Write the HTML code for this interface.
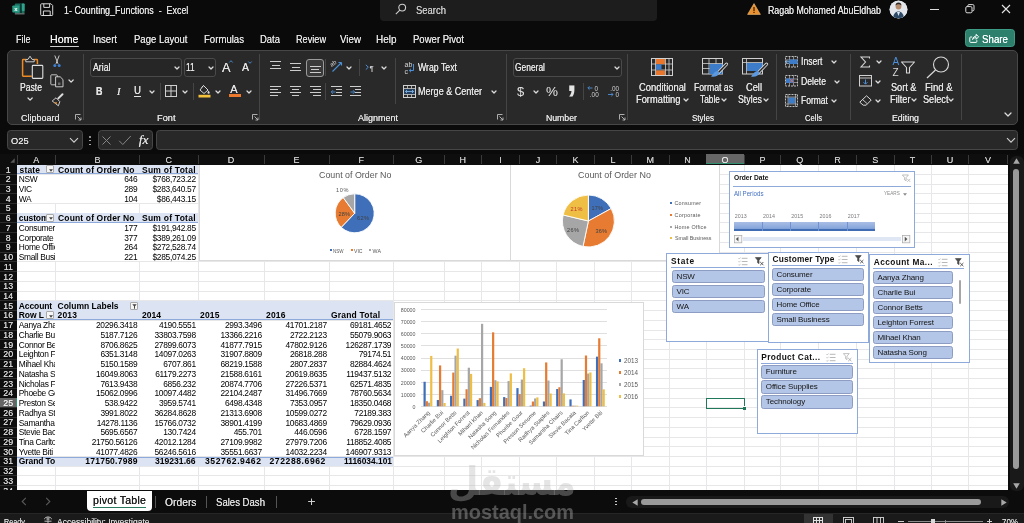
<!DOCTYPE html>
<html lang="en"><head><meta charset="utf-8"><title>1- Counting_Functions - Excel</title>
<style>
html,body{margin:0;padding:0;background:#0a0a0a;}
body{width:1024px;height:523px;overflow:hidden;position:relative;will-change:transform;font-family:"Liberation Sans",sans-serif;}
.t{position:absolute;white-space:pre;display:block;}
.ui .t{text-shadow:0 0 .45px currentColor;}
.r{position:absolute;display:block;}
svg{overflow:visible;}
</style></head>
<body>
<!-- gen_frame -->
<div class="ui">
<svg class="r" style="left:11.500px;top:2.800px" width="13" height="12" viewBox="0 0 13 12"><rect x="2.800" y="9.600" width="9.800" height="2" rx="0.600" fill="#5c6b68"/><rect x="2.800" y="0.400" width="9.800" height="9.600" rx="1" fill="#1b6f60"/><rect x="8" y="0.400" width="2" height="9.600" fill="#0d3b33"/><rect x="9.800" y="0.400" width="2.800" height="7.600" rx="0.800" fill="#2fa28c"/><rect x="0.300" y="2.400" width="7" height="7" rx="0.900" fill="#2a9b86"/><text x="3.800" y="8" font-size="6" font-weight="bold" fill="#fff" text-anchor="middle" font-family="Liberation Sans, sans-serif">x</text></svg>
<svg class="r" style="left:40px;top:3px" width="14" height="13" viewBox="0 0 14 13" fill="none" stroke="#d8d8d8" stroke-width="1"><path d="M1.5 0.8h9.5l1.7 1.7v9.2a.8.8 0 0 1-.8.8h-10.4a.8.8 0 0 1-.8-.8v-10.1a.8.8 0 0 1 .8-.8z"/><path d="M3.8 0.8v3.6h5.8v-3.6"/><path d="M3.4 12.4v-4.4h6.8v4.4"/></svg>
<span class="t" style="left:64.00px;top:4.79px;font-size:10.2px;line-height:12.24px;color:#e4e4e4;transform:scaleX(0.8749);transform-origin:0 50%;">1- Counting_Functions  -  Excel</span>
<div class="r" style="left:380.00px;top:0.00px;width:277.00px;height:21.00px;background:#1d1d1d;border-radius:0 0 4px 4px;"></div>
<svg class="r" style="left:395px;top:3px" width="12" height="12" viewBox="0 0 12 12" fill="none" stroke="#cfcfcf" stroke-width="1.1"><circle cx="7.2" cy="4.6" r="3.4"/><path d="M4.8 7.1L0.8 11.2"/></svg>
<span class="t" style="left:416.00px;top:4.59px;font-size:10.2px;line-height:12.24px;color:#c9c9c9;transform:scaleX(0.9283);transform-origin:0 50%;">Search</span>
<svg class="r" style="left:747px;top:3px" width="14" height="12" viewBox="0 0 14 12"><path d="M7 0.6L13.4 11.4H0.6z" fill="#e9902f" stroke="#f4c27a" stroke-width="0.6"/><rect x="6.4" y="4" width="1.2" height="4" fill="#3a1a00"/><rect x="6.4" y="8.8" width="1.2" height="1.2" fill="#3a1a00"/></svg>
<span class="t" style="left:768.00px;top:4.59px;font-size:10.2px;line-height:12.24px;color:#e4e4e4;transform:scaleX(0.8664);transform-origin:0 50%;">Ragab Mohamed AbuEldhab</span>
<svg class="r" style="left:889px;top:0px" width="19" height="19" viewBox="0 0 19 19"><defs><clipPath id="av"><circle cx="9.5" cy="9.5" r="8.8"/></clipPath></defs><circle cx="9.5" cy="9.5" r="9" fill="#e9ecef"/><g clip-path="url(#av)"><rect x="0" y="0" width="19" height="19" fill="#e3e6ea"/><path d="M4 19c0-5 2.5-7.5 5.5-7.5s5.500 2.5 5.500 7.500z" fill="#2d4a66"/><circle cx="9.5" cy="6.500" r="2.900" fill="#b58b6e"/><path d="M6.5 5.600c0-2.200 1.300-3.200 3-3.200s3 1 3 3.200c-1-1-2-1.300-3-1.300s-2 .3-3 1.300z" fill="#2a2422"/><path d="M8 12l1.500 4 1.500-4z" fill="#dfe6ee"/></g></svg>
<div class="r" style="left:930.00px;top:8.60px;width:8.50px;height:1.10px;background:#dcdcdc;"></div>
<svg class="r" style="left:965px;top:4px" width="10" height="10" viewBox="0 0 10 10" fill="none" stroke="#dcdcdc" stroke-width="1"><rect x="0.8" y="2.600" width="6.200" height="6.200" rx="1.200"/><path d="M2.800 2.400v-.6a1.200 1.200 0 0 1 1.200-1.200h3.800a1.200 1.200 0 0 1 1.200 1.200v3.800a1.200 1.200 0 0 1-1.200 1.200h-.6"/></svg>
<svg class="r" style="left:1001px;top:4px" width="10" height="10" viewBox="0 0 10 10" fill="none" stroke="#e4e4e4" stroke-width="1.100"><path d="M1 1l8 8M9 1l-8 8"/></svg>
<span class="t" style="left:16.00px;top:32.88px;font-size:10.6px;line-height:12.72px;color:#e2e2e2;transform:scaleX(0.8489);transform-origin:0 50%;">File</span>
<span class="t" style="left:50.00px;top:32.88px;font-size:10.6px;line-height:12.72px;color:#f4f4f4;letter-spacing:0.075px;text-shadow:0 0 .4px #fff;">Home</span>
<span class="t" style="left:93.00px;top:32.88px;font-size:10.6px;line-height:12.72px;color:#e2e2e2;transform:scaleX(0.9053);transform-origin:0 50%;">Insert</span>
<span class="t" style="left:134.00px;top:32.88px;font-size:10.6px;line-height:12.72px;color:#e2e2e2;transform:scaleX(0.8988);transform-origin:0 50%;">Page Layout</span>
<span class="t" style="left:203.50px;top:32.88px;font-size:10.6px;line-height:12.72px;color:#e2e2e2;transform:scaleX(0.9055);transform-origin:0 50%;">Formulas</span>
<span class="t" style="left:259.50px;top:32.88px;font-size:10.6px;line-height:12.72px;color:#e2e2e2;transform:scaleX(0.8932);transform-origin:0 50%;">Data</span>
<span class="t" style="left:295.50px;top:32.88px;font-size:10.6px;line-height:12.72px;color:#e2e2e2;transform:scaleX(0.8632);transform-origin:0 50%;">Review</span>
<span class="t" style="left:340.00px;top:32.88px;font-size:10.6px;line-height:12.72px;color:#e2e2e2;transform:scaleX(0.9217);transform-origin:0 50%;">View</span>
<span class="t" style="left:375.50px;top:32.88px;font-size:10.6px;line-height:12.72px;color:#e2e2e2;transform:scaleX(0.9403);transform-origin:0 50%;">Help</span>
<span class="t" style="left:412.50px;top:32.88px;font-size:10.6px;line-height:12.72px;color:#e2e2e2;transform:scaleX(0.9018);transform-origin:0 50%;">Power Pivot</span>
<div class="r" style="left:50.00px;top:45.50px;width:28.50px;height:1.50px;background:#d0d0d0;border-radius:1px;"></div>
<div class="r" style="left:964.50px;top:29.30px;width:50.30px;height:17.70px;background:#2c806c;border-radius:3.5px;border:1px solid #3c9c85;box-sizing:border-box;"></div>
<svg class="r" style="left:969px;top:33px" width="10" height="10" viewBox="0 0 10 10" fill="none" stroke="#fff" stroke-width="1"><path d="M3.200 4h-1.700a.7.7 0 0 0-.7.7v4a.7.7 0 0 0 .7.7h5.600a.7.7 0 0 0 .7-.7v-1.500"/><path d="M3.600 6.600c.3-2.300 1.700-3.400 3.600-3.500v-1.800l2.400 2.500-2.400 2.500v-1.700c-1.500 0-2.700.5-3.600 2z"/></svg>
<span class="t" style="left:981.50px;top:32.58px;font-size:10.8px;line-height:12.96px;color:#ffffff;transform:scaleX(0.9022);transform-origin:0 50%;text-shadow:0 0 .5px #fff;">Share</span>
<div class="r" style="left:6.50px;top:50.00px;width:1011.50px;height:74.50px;background:#292929;border-radius:5px;border:1px solid #474747;box-sizing:border-box;"></div>
<div class="r" style="left:83.00px;top:54.00px;width:1.00px;height:66.00px;background:#454545;"></div>
<div class="r" style="left:259.00px;top:54.00px;width:1.00px;height:66.00px;background:#454545;"></div>
<div class="r" style="left:506.00px;top:54.00px;width:1.00px;height:66.00px;background:#454545;"></div>
<div class="r" style="left:627.00px;top:54.00px;width:1.00px;height:66.00px;background:#454545;"></div>
<div class="r" style="left:776.00px;top:54.00px;width:1.00px;height:66.00px;background:#454545;"></div>
<div class="r" style="left:849.50px;top:54.00px;width:1.00px;height:66.00px;background:#454545;"></div>
<div class="r" style="left:960.50px;top:54.00px;width:1.00px;height:66.00px;background:#454545;"></div>
<div class="r" style="left:6.50px;top:130.00px;width:76.00px;height:19.50px;background:#282828;border-radius:3.500px;border:1px solid #464646;box-sizing:border-box;"></div>
<span class="t" style="left:11.20px;top:135.32px;font-size:9.4px;line-height:11.28px;color:#e4e4e4;transform:scaleX(0.9906);transform-origin:0 50%;">O25</span>
<svg class="r" style="left:69px;top:137px" width="10" height="7" viewBox="0 0 10 7" fill="none" stroke="#d0d0d0" stroke-width="1.100"><path d="M1 1.200l4 4 4-4"/></svg>
<div class="r" style="left:89.30px;top:136.30px;width:1.40px;height:1.40px;background:#bdbdbd;border-radius:1px;"></div>
<div class="r" style="left:89.30px;top:140.00px;width:1.40px;height:1.40px;background:#bdbdbd;border-radius:1px;"></div>
<div class="r" style="left:89.30px;top:143.70px;width:1.40px;height:1.40px;background:#bdbdbd;border-radius:1px;"></div>
<div class="r" style="left:97.50px;top:130.00px;width:55.50px;height:19.50px;background:#282828;border-radius:3.500px;border:1px solid #464646;box-sizing:border-box;"></div>
<svg class="r" style="left:101px;top:135px" width="11" height="11" viewBox="0 0 11 11" fill="none" stroke="#858585" stroke-width="1"><path d="M1.500 1.500l8 8M9.500 1.500l-8 8"/></svg>
<svg class="r" style="left:118px;top:135px" width="14" height="11" viewBox="0 0 14 11" fill="none" stroke="#858585" stroke-width="1"><path d="M1.200 5.800l3.600 3.700 8-8.500"/></svg>
<span class="t" style="left:138.63px;top:132.15px;font-size:13.5px;line-height:16.20px;color:#e0e0e0;font-style:italic;font-family:'Liberation Serif',serif;">fx</span>
<div class="r" style="left:156.00px;top:130.00px;width:862.00px;height:19.50px;background:#282828;border-radius:3.500px;border:1px solid #464646;box-sizing:border-box;"></div>
<svg class="r" style="left:1006px;top:136.500px" width="10" height="7" viewBox="0 0 10 7" fill="none" stroke="#d0d0d0" stroke-width="1.100"><path d="M1 1.200l4 4 4-4"/></svg>
</div>
<!-- gen_grid -->
<div class="ui">
<div class="r" style="left:0.00px;top:153.50px;width:1024.00px;height:336.50px;background:#0e0e0e;"></div>
<div class="r" style="left:17.00px;top:164.60px;width:990.70px;height:325.40px;background:#ffffff;"></div>
<div class="r" style="left:55.00px;top:164.60px;width:1.00px;height:325.40px;background:#e7e7ea;"></div>
<div class="r" style="left:139.00px;top:164.60px;width:1.00px;height:325.40px;background:#e7e7ea;"></div>
<div class="r" style="left:197.50px;top:164.60px;width:1.00px;height:325.40px;background:#e7e7ea;"></div>
<div class="r" style="left:263.50px;top:164.60px;width:1.00px;height:325.40px;background:#e7e7ea;"></div>
<div class="r" style="left:328.50px;top:164.60px;width:1.00px;height:325.40px;background:#e7e7ea;"></div>
<div class="r" style="left:392.90px;top:164.60px;width:1.00px;height:325.40px;background:#e7e7ea;"></div>
<div class="r" style="left:443.50px;top:164.60px;width:1.00px;height:325.40px;background:#e7e7ea;"></div>
<div class="r" style="left:481.00px;top:164.60px;width:1.00px;height:325.40px;background:#e7e7ea;"></div>
<div class="r" style="left:519.20px;top:164.60px;width:1.00px;height:325.40px;background:#e7e7ea;"></div>
<div class="r" style="left:556.00px;top:164.60px;width:1.00px;height:325.40px;background:#e7e7ea;"></div>
<div class="r" style="left:594.20px;top:164.60px;width:1.00px;height:325.40px;background:#e7e7ea;"></div>
<div class="r" style="left:631.00px;top:164.60px;width:1.00px;height:325.40px;background:#e7e7ea;"></div>
<div class="r" style="left:668.50px;top:164.60px;width:1.00px;height:325.40px;background:#e7e7ea;"></div>
<div class="r" style="left:705.50px;top:164.60px;width:1.00px;height:325.40px;background:#e7e7ea;"></div>
<div class="r" style="left:743.70px;top:164.60px;width:1.00px;height:325.40px;background:#e7e7ea;"></div>
<div class="r" style="left:780.20px;top:164.60px;width:1.00px;height:325.40px;background:#e7e7ea;"></div>
<div class="r" style="left:818.20px;top:164.60px;width:1.00px;height:325.40px;background:#e7e7ea;"></div>
<div class="r" style="left:855.90px;top:164.60px;width:1.00px;height:325.40px;background:#e7e7ea;"></div>
<div class="r" style="left:893.50px;top:164.60px;width:1.00px;height:325.40px;background:#e7e7ea;"></div>
<div class="r" style="left:930.50px;top:164.60px;width:1.00px;height:325.40px;background:#e7e7ea;"></div>
<div class="r" style="left:968.30px;top:164.60px;width:1.00px;height:325.40px;background:#e7e7ea;"></div>
<div class="r" style="left:17.00px;top:173.83px;width:990.70px;height:1.00px;background:#e7e7ea;"></div>
<div class="r" style="left:17.00px;top:183.56px;width:990.70px;height:1.00px;background:#e7e7ea;"></div>
<div class="r" style="left:17.00px;top:193.29px;width:990.70px;height:1.00px;background:#e7e7ea;"></div>
<div class="r" style="left:17.00px;top:203.02px;width:990.70px;height:1.00px;background:#e7e7ea;"></div>
<div class="r" style="left:17.00px;top:212.75px;width:990.70px;height:1.00px;background:#e7e7ea;"></div>
<div class="r" style="left:17.00px;top:222.48px;width:990.70px;height:1.00px;background:#e7e7ea;"></div>
<div class="r" style="left:17.00px;top:232.21px;width:990.70px;height:1.00px;background:#e7e7ea;"></div>
<div class="r" style="left:17.00px;top:241.94px;width:990.70px;height:1.00px;background:#e7e7ea;"></div>
<div class="r" style="left:17.00px;top:251.67px;width:990.70px;height:1.00px;background:#e7e7ea;"></div>
<div class="r" style="left:17.00px;top:261.40px;width:990.70px;height:1.00px;background:#e7e7ea;"></div>
<div class="r" style="left:17.00px;top:271.13px;width:990.70px;height:1.00px;background:#e7e7ea;"></div>
<div class="r" style="left:17.00px;top:280.86px;width:990.70px;height:1.00px;background:#e7e7ea;"></div>
<div class="r" style="left:17.00px;top:290.59px;width:990.70px;height:1.00px;background:#e7e7ea;"></div>
<div class="r" style="left:17.00px;top:300.32px;width:990.70px;height:1.00px;background:#e7e7ea;"></div>
<div class="r" style="left:17.00px;top:310.05px;width:990.70px;height:1.00px;background:#e7e7ea;"></div>
<div class="r" style="left:17.00px;top:319.78px;width:990.70px;height:1.00px;background:#e7e7ea;"></div>
<div class="r" style="left:17.00px;top:329.51px;width:990.70px;height:1.00px;background:#e7e7ea;"></div>
<div class="r" style="left:17.00px;top:339.24px;width:990.70px;height:1.00px;background:#e7e7ea;"></div>
<div class="r" style="left:17.00px;top:348.97px;width:990.70px;height:1.00px;background:#e7e7ea;"></div>
<div class="r" style="left:17.00px;top:358.70px;width:990.70px;height:1.00px;background:#e7e7ea;"></div>
<div class="r" style="left:17.00px;top:368.43px;width:990.70px;height:1.00px;background:#e7e7ea;"></div>
<div class="r" style="left:17.00px;top:378.16px;width:990.70px;height:1.00px;background:#e7e7ea;"></div>
<div class="r" style="left:17.00px;top:387.89px;width:990.70px;height:1.00px;background:#e7e7ea;"></div>
<div class="r" style="left:17.00px;top:397.62px;width:990.70px;height:1.00px;background:#e7e7ea;"></div>
<div class="r" style="left:17.00px;top:407.35px;width:990.70px;height:1.00px;background:#e7e7ea;"></div>
<div class="r" style="left:17.00px;top:417.08px;width:990.70px;height:1.00px;background:#e7e7ea;"></div>
<div class="r" style="left:17.00px;top:426.81px;width:990.70px;height:1.00px;background:#e7e7ea;"></div>
<div class="r" style="left:17.00px;top:436.54px;width:990.70px;height:1.00px;background:#e7e7ea;"></div>
<div class="r" style="left:17.00px;top:446.27px;width:990.70px;height:1.00px;background:#e7e7ea;"></div>
<div class="r" style="left:17.00px;top:456.00px;width:990.70px;height:1.00px;background:#e7e7ea;"></div>
<div class="r" style="left:17.00px;top:465.73px;width:990.70px;height:1.00px;background:#e7e7ea;"></div>
<div class="r" style="left:17.00px;top:475.46px;width:990.70px;height:1.00px;background:#e7e7ea;"></div>
<div class="r" style="left:17.00px;top:485.19px;width:990.70px;height:1.00px;background:#e7e7ea;"></div>
<span class="t" style="left:33.25px;top:154.53px;font-size:9px;line-height:10.80px;color:#c8c8c8;">A</span>
<div class="r" style="left:55.00px;top:155.00px;width:1.00px;height:9.00px;background:#3a3a3a;"></div>
<span class="t" style="left:94.50px;top:154.53px;font-size:9px;line-height:10.80px;color:#c8c8c8;">B</span>
<div class="r" style="left:139.00px;top:155.00px;width:1.00px;height:9.00px;background:#3a3a3a;"></div>
<span class="t" style="left:165.50px;top:154.53px;font-size:9px;line-height:10.80px;color:#c8c8c8;">C</span>
<div class="r" style="left:197.50px;top:155.00px;width:1.00px;height:9.00px;background:#3a3a3a;"></div>
<span class="t" style="left:227.75px;top:154.53px;font-size:9px;line-height:10.80px;color:#c8c8c8;">D</span>
<div class="r" style="left:263.50px;top:155.00px;width:1.00px;height:9.00px;background:#3a3a3a;"></div>
<span class="t" style="left:293.50px;top:154.53px;font-size:9px;line-height:10.80px;color:#c8c8c8;">E</span>
<div class="r" style="left:328.50px;top:155.00px;width:1.00px;height:9.00px;background:#3a3a3a;"></div>
<span class="t" style="left:358.45px;top:154.53px;font-size:9px;line-height:10.80px;color:#c8c8c8;">F</span>
<div class="r" style="left:392.90px;top:155.00px;width:1.00px;height:9.00px;background:#3a3a3a;"></div>
<span class="t" style="left:415.20px;top:154.53px;font-size:9px;line-height:10.80px;color:#c8c8c8;">G</span>
<div class="r" style="left:443.50px;top:155.00px;width:1.00px;height:9.00px;background:#3a3a3a;"></div>
<span class="t" style="left:459.50px;top:154.53px;font-size:9px;line-height:10.80px;color:#c8c8c8;">H</span>
<div class="r" style="left:481.00px;top:155.00px;width:1.00px;height:9.00px;background:#3a3a3a;"></div>
<span class="t" style="left:499.35px;top:154.53px;font-size:9px;line-height:10.80px;color:#c8c8c8;">I</span>
<div class="r" style="left:519.20px;top:155.00px;width:1.00px;height:9.00px;background:#3a3a3a;"></div>
<span class="t" style="left:535.85px;top:154.53px;font-size:9px;line-height:10.80px;color:#c8c8c8;">J</span>
<div class="r" style="left:556.00px;top:155.00px;width:1.00px;height:9.00px;background:#3a3a3a;"></div>
<span class="t" style="left:572.60px;top:154.53px;font-size:9px;line-height:10.80px;color:#c8c8c8;">K</span>
<div class="r" style="left:594.20px;top:155.00px;width:1.00px;height:9.00px;background:#3a3a3a;"></div>
<span class="t" style="left:610.60px;top:154.53px;font-size:9px;line-height:10.80px;color:#c8c8c8;">L</span>
<div class="r" style="left:631.00px;top:155.00px;width:1.00px;height:9.00px;background:#3a3a3a;"></div>
<span class="t" style="left:646.50px;top:154.53px;font-size:9px;line-height:10.80px;color:#c8c8c8;">M</span>
<div class="r" style="left:668.50px;top:155.00px;width:1.00px;height:9.00px;background:#3a3a3a;"></div>
<span class="t" style="left:684.25px;top:154.53px;font-size:9px;line-height:10.80px;color:#c8c8c8;">N</span>
<div class="r" style="left:705.50px;top:155.00px;width:1.00px;height:9.00px;background:#3a3a3a;"></div>
<div class="r" style="left:706.00px;top:154.00px;width:38.20px;height:10.00px;background:#666666;border-bottom:1px solid #2f8f6f;box-sizing:border-box;"></div>
<span class="t" style="left:721.60px;top:154.53px;font-size:9px;line-height:10.80px;color:#e6e6e6;">O</span>
<div class="r" style="left:743.70px;top:155.00px;width:1.00px;height:9.00px;background:#3a3a3a;"></div>
<span class="t" style="left:759.45px;top:154.53px;font-size:9px;line-height:10.80px;color:#c8c8c8;">P</span>
<div class="r" style="left:780.20px;top:155.00px;width:1.00px;height:9.00px;background:#3a3a3a;"></div>
<span class="t" style="left:796.20px;top:154.53px;font-size:9px;line-height:10.80px;color:#c8c8c8;">Q</span>
<div class="r" style="left:818.20px;top:155.00px;width:1.00px;height:9.00px;background:#3a3a3a;"></div>
<span class="t" style="left:834.30px;top:154.53px;font-size:9px;line-height:10.80px;color:#c8c8c8;">R</span>
<div class="r" style="left:855.90px;top:155.00px;width:1.00px;height:9.00px;background:#3a3a3a;"></div>
<span class="t" style="left:872.20px;top:154.53px;font-size:9px;line-height:10.80px;color:#c8c8c8;">S</span>
<div class="r" style="left:893.50px;top:155.00px;width:1.00px;height:9.00px;background:#3a3a3a;"></div>
<span class="t" style="left:909.75px;top:154.53px;font-size:9px;line-height:10.80px;color:#c8c8c8;">T</span>
<div class="r" style="left:930.50px;top:155.00px;width:1.00px;height:9.00px;background:#3a3a3a;"></div>
<span class="t" style="left:946.65px;top:154.53px;font-size:9px;line-height:10.80px;color:#c8c8c8;">U</span>
<div class="r" style="left:968.30px;top:155.00px;width:1.00px;height:9.00px;background:#3a3a3a;"></div>
<span class="t" style="left:984.90px;top:154.53px;font-size:9px;line-height:10.80px;color:#c8c8c8;">V</span>
<div class="r" style="left:1006.50px;top:155.00px;width:1.00px;height:9.00px;background:#3a3a3a;"></div>
<div class="r" style="left:16.50px;top:155.00px;width:1.00px;height:9.00px;background:#3a3a3a;"></div>
<svg class="r" style="left:10px;top:158px" width="5" height="5" viewBox="0 0 5 5"><path d="M4.700 0.300v4.400h-4.400z" fill="#5a5a5a"/></svg>
<span class="t" style="left:5.80px;top:164.50px;font-size:8.8px;line-height:10.56px;color:#d4d4d4;">1</span>
<div class="r" style="left:0.00px;top:173.83px;width:17.00px;height:1.00px;background:#2c2c2c;"></div>
<span class="t" style="left:5.80px;top:174.23px;font-size:8.8px;line-height:10.56px;color:#d4d4d4;">2</span>
<div class="r" style="left:0.00px;top:183.56px;width:17.00px;height:1.00px;background:#2c2c2c;"></div>
<span class="t" style="left:5.80px;top:183.96px;font-size:8.8px;line-height:10.56px;color:#d4d4d4;">3</span>
<div class="r" style="left:0.00px;top:193.29px;width:17.00px;height:1.00px;background:#2c2c2c;"></div>
<span class="t" style="left:5.80px;top:193.69px;font-size:8.8px;line-height:10.56px;color:#d4d4d4;">4</span>
<div class="r" style="left:0.00px;top:203.02px;width:17.00px;height:1.00px;background:#2c2c2c;"></div>
<span class="t" style="left:5.80px;top:203.42px;font-size:8.8px;line-height:10.56px;color:#d4d4d4;">5</span>
<div class="r" style="left:0.00px;top:212.75px;width:17.00px;height:1.00px;background:#2c2c2c;"></div>
<span class="t" style="left:5.80px;top:213.15px;font-size:8.8px;line-height:10.56px;color:#d4d4d4;">6</span>
<div class="r" style="left:0.00px;top:222.48px;width:17.00px;height:1.00px;background:#2c2c2c;"></div>
<span class="t" style="left:5.80px;top:222.88px;font-size:8.8px;line-height:10.56px;color:#d4d4d4;">7</span>
<div class="r" style="left:0.00px;top:232.21px;width:17.00px;height:1.00px;background:#2c2c2c;"></div>
<span class="t" style="left:5.80px;top:232.61px;font-size:8.8px;line-height:10.56px;color:#d4d4d4;">8</span>
<div class="r" style="left:0.00px;top:241.94px;width:17.00px;height:1.00px;background:#2c2c2c;"></div>
<span class="t" style="left:5.80px;top:242.34px;font-size:8.8px;line-height:10.56px;color:#d4d4d4;">9</span>
<div class="r" style="left:0.00px;top:251.67px;width:17.00px;height:1.00px;background:#2c2c2c;"></div>
<span class="t" style="left:3.36px;top:252.07px;font-size:8.8px;line-height:10.56px;color:#d4d4d4;">10</span>
<div class="r" style="left:0.00px;top:261.40px;width:17.00px;height:1.00px;background:#2c2c2c;"></div>
<span class="t" style="left:3.68px;top:261.80px;font-size:8.8px;line-height:10.56px;color:#d4d4d4;">11</span>
<div class="r" style="left:0.00px;top:271.13px;width:17.00px;height:1.00px;background:#2c2c2c;"></div>
<span class="t" style="left:3.36px;top:271.53px;font-size:8.8px;line-height:10.56px;color:#d4d4d4;">12</span>
<div class="r" style="left:0.00px;top:280.86px;width:17.00px;height:1.00px;background:#2c2c2c;"></div>
<span class="t" style="left:3.36px;top:281.26px;font-size:8.8px;line-height:10.56px;color:#d4d4d4;">13</span>
<div class="r" style="left:0.00px;top:290.59px;width:17.00px;height:1.00px;background:#2c2c2c;"></div>
<span class="t" style="left:3.36px;top:290.99px;font-size:8.8px;line-height:10.56px;color:#d4d4d4;">14</span>
<div class="r" style="left:0.00px;top:300.32px;width:17.00px;height:1.00px;background:#2c2c2c;"></div>
<span class="t" style="left:3.36px;top:300.72px;font-size:8.8px;line-height:10.56px;color:#d4d4d4;">15</span>
<div class="r" style="left:0.00px;top:310.05px;width:17.00px;height:1.00px;background:#2c2c2c;"></div>
<span class="t" style="left:3.36px;top:310.45px;font-size:8.8px;line-height:10.56px;color:#d4d4d4;">16</span>
<div class="r" style="left:0.00px;top:319.78px;width:17.00px;height:1.00px;background:#2c2c2c;"></div>
<span class="t" style="left:3.36px;top:320.18px;font-size:8.8px;line-height:10.56px;color:#d4d4d4;">17</span>
<div class="r" style="left:0.00px;top:329.51px;width:17.00px;height:1.00px;background:#2c2c2c;"></div>
<span class="t" style="left:3.36px;top:329.91px;font-size:8.8px;line-height:10.56px;color:#d4d4d4;">18</span>
<div class="r" style="left:0.00px;top:339.24px;width:17.00px;height:1.00px;background:#2c2c2c;"></div>
<span class="t" style="left:3.36px;top:339.64px;font-size:8.8px;line-height:10.56px;color:#d4d4d4;">19</span>
<div class="r" style="left:0.00px;top:348.97px;width:17.00px;height:1.00px;background:#2c2c2c;"></div>
<span class="t" style="left:3.36px;top:349.37px;font-size:8.8px;line-height:10.56px;color:#d4d4d4;">20</span>
<div class="r" style="left:0.00px;top:358.70px;width:17.00px;height:1.00px;background:#2c2c2c;"></div>
<span class="t" style="left:3.36px;top:359.10px;font-size:8.8px;line-height:10.56px;color:#d4d4d4;">21</span>
<div class="r" style="left:0.00px;top:368.43px;width:17.00px;height:1.00px;background:#2c2c2c;"></div>
<span class="t" style="left:3.36px;top:368.83px;font-size:8.8px;line-height:10.56px;color:#d4d4d4;">22</span>
<div class="r" style="left:0.00px;top:378.16px;width:17.00px;height:1.00px;background:#2c2c2c;"></div>
<span class="t" style="left:3.36px;top:378.56px;font-size:8.8px;line-height:10.56px;color:#d4d4d4;">23</span>
<div class="r" style="left:0.00px;top:387.89px;width:17.00px;height:1.00px;background:#2c2c2c;"></div>
<span class="t" style="left:3.36px;top:388.29px;font-size:8.8px;line-height:10.56px;color:#d4d4d4;">24</span>
<div class="r" style="left:0.00px;top:397.62px;width:17.00px;height:1.00px;background:#2c2c2c;"></div>
<div class="r" style="left:0.00px;top:398.12px;width:17.00px;height:9.73px;background:#666666;border-right:1px solid #2f8f6f;box-sizing:border-box;"></div>
<span class="t" style="left:3.36px;top:398.02px;font-size:8.8px;line-height:10.56px;color:#f0f0f0;">25</span>
<div class="r" style="left:0.00px;top:407.35px;width:17.00px;height:1.00px;background:#2c2c2c;"></div>
<span class="t" style="left:3.36px;top:407.75px;font-size:8.8px;line-height:10.56px;color:#d4d4d4;">26</span>
<div class="r" style="left:0.00px;top:417.08px;width:17.00px;height:1.00px;background:#2c2c2c;"></div>
<span class="t" style="left:3.36px;top:417.48px;font-size:8.8px;line-height:10.56px;color:#d4d4d4;">27</span>
<div class="r" style="left:0.00px;top:426.81px;width:17.00px;height:1.00px;background:#2c2c2c;"></div>
<span class="t" style="left:3.36px;top:427.21px;font-size:8.8px;line-height:10.56px;color:#d4d4d4;">28</span>
<div class="r" style="left:0.00px;top:436.54px;width:17.00px;height:1.00px;background:#2c2c2c;"></div>
<span class="t" style="left:3.36px;top:436.94px;font-size:8.8px;line-height:10.56px;color:#d4d4d4;">29</span>
<div class="r" style="left:0.00px;top:446.27px;width:17.00px;height:1.00px;background:#2c2c2c;"></div>
<span class="t" style="left:3.36px;top:446.67px;font-size:8.8px;line-height:10.56px;color:#d4d4d4;">30</span>
<div class="r" style="left:0.00px;top:456.00px;width:17.00px;height:1.00px;background:#2c2c2c;"></div>
<span class="t" style="left:3.36px;top:456.40px;font-size:8.8px;line-height:10.56px;color:#d4d4d4;">31</span>
<div class="r" style="left:0.00px;top:465.73px;width:17.00px;height:1.00px;background:#2c2c2c;"></div>
<span class="t" style="left:3.36px;top:466.13px;font-size:8.8px;line-height:10.56px;color:#d4d4d4;">32</span>
<div class="r" style="left:0.00px;top:475.46px;width:17.00px;height:1.00px;background:#2c2c2c;"></div>
<span class="t" style="left:3.36px;top:475.86px;font-size:8.8px;line-height:10.56px;color:#d4d4d4;">33</span>
<div class="r" style="left:0.00px;top:485.19px;width:17.00px;height:1.00px;background:#2c2c2c;"></div>
<span class="t" style="left:3.36px;top:485.59px;font-size:8.8px;line-height:10.56px;color:#d4d4d4;">34</span>
<div class="r" style="left:0.00px;top:494.92px;width:17.00px;height:1.00px;background:#2c2c2c;"></div>
</div>
<!-- gen_bottom -->
<div class="ui">
<div class="r" style="left:1007.50px;top:153.50px;width:16.50px;height:337.00px;background:#0c0c0c;"></div>
<div class="r" style="left:1010.00px;top:155.50px;width:13.50px;height:335.30px;background:#191919;border-radius:6px;"></div>
<div class="r" style="left:1013.20px;top:168.70px;width:6.20px;height:300.70px;background:#9a9a9a;border-radius:3px;"></div>
<svg class="r" style="left:1012.800px;top:158.300px" width="7" height="6" viewBox="0 0 7 6"><path d="M3.500 0.300l3.300 5.400h-6.600z" fill="#a8a8a8"/></svg>
<svg class="r" style="left:1012.800px;top:483px" width="7" height="6" viewBox="0 0 7 6"><path d="M3.500 5.700l3.300-5.400h-6.600z" fill="#a8a8a8"/></svg>
<div class="r" style="left:0.00px;top:490.00px;width:1008.00px;height:23.40px;background:#0c0c0c;"></div>
<div class="r" style="left:1008.00px;top:490.80px;width:16.00px;height:22.60px;background:#0c0c0c;"></div>
<div class="r" style="left:0.00px;top:513.40px;width:1024.00px;height:9.60px;background:#1a1a1a;border-top:1px solid #262626;box-sizing:border-box;"></div>
<svg class="r" style="left:21px;top:497px" width="6" height="9" viewBox="0 0 6 9" fill="none" stroke="#5a5a5a" stroke-width="1.100"><path d="M4.800 0.800l-3.600 3.700 3.600 3.700"/></svg>
<svg class="r" style="left:45px;top:497px" width="6" height="9" viewBox="0 0 6 9" fill="none" stroke="#5a5a5a" stroke-width="1.100"><path d="M1.200 0.800l3.600 3.700-3.600 3.700"/></svg>
<div class="r" style="left:87.00px;top:490.60px;width:65.00px;height:20.00px;background:#ffffff;border-radius:0 0 4px 4px;"></div>
<span class="t" style="left:93.00px;top:494.18px;font-size:10.6px;line-height:12.72px;color:#1c1c1c;letter-spacing:0.252px;text-shadow:0 0 .4px #1c1c1c;">pivot Table</span>
<div class="r" style="left:93.00px;top:506.60px;width:53.00px;height:1.60px;background:#2a7a62;"></div>
<span class="t" style="left:165.00px;top:495.68px;font-size:10.6px;line-height:12.72px;color:#e0e0e0;transform:scaleX(0.9724);transform-origin:0 50%;">Orders</span>
<span class="t" style="left:216.00px;top:495.68px;font-size:10.6px;line-height:12.72px;color:#e0e0e0;transform:scaleX(0.9040);transform-origin:0 50%;">Sales Dash</span>
<div class="r" style="left:155.00px;top:496.00px;width:1.00px;height:12.00px;background:#555;"></div>
<div class="r" style="left:206.00px;top:496.00px;width:1.00px;height:12.00px;background:#555;"></div>
<div class="r" style="left:275.50px;top:496.00px;width:1.00px;height:12.00px;background:#555;"></div>
<span class="t" style="left:307.70px;top:494.11px;font-size:13px;line-height:15.60px;color:#d0d0d0;">+</span>
<div class="r" style="left:626.00px;top:495.50px;width:383.00px;height:12.80px;background:#191919;border-radius:6px;"></div>
<div class="r" style="left:615.30px;top:497.80px;width:1.40px;height:1.40px;background:#c8c8c8;"></div>
<div class="r" style="left:615.30px;top:500.80px;width:1.40px;height:1.40px;background:#c8c8c8;"></div>
<div class="r" style="left:615.30px;top:503.80px;width:1.40px;height:1.40px;background:#c8c8c8;"></div>
<svg class="r" style="left:631.500px;top:498.500px" width="6" height="7" viewBox="0 0 6 7"><path d="M0.300 3.500l5.400-3.300v6.600z" fill="#a8a8a8"/></svg>
<svg class="r" style="left:1000.500px;top:498.500px" width="6" height="7" viewBox="0 0 6 7"><path d="M5.700 3.500l-5.400-3.300v6.600z" fill="#a8a8a8"/></svg>
<div class="r" style="left:641.00px;top:498.70px;width:340.30px;height:6.80px;background:#9a9a9a;border-radius:3.5px;"></div>
<span class="t" style="left:4.34px;top:517.23px;font-size:9px;line-height:10.80px;color:#d6d6d6;transform:scaleX(0.8000);transform-origin:0 50%;">Ready</span>
<svg class="r" style="left:42.500px;top:516px" width="10" height="10" viewBox="0 0 10 10" fill="none" stroke="#d0d0d0" stroke-width="0.900"><circle cx="5" cy="3" r="1.100"/><path d="M1.500 5.200h7M5 5.200v3"/><path d="M8.800 3a4.500 4.500 0 0 0-7.600 0"/></svg>
<span class="t" style="left:56.50px;top:517.23px;font-size:9px;line-height:10.80px;color:#d6d6d6;transform:scaleX(0.9483);transform-origin:0 50%;">Accessibility: Investigate</span>
<div class="r" style="left:804.00px;top:514.40px;width:28.70px;height:8.60px;background:#333333;"></div>
<svg class="r" style="left:813px;top:517px" width="10" height="8" viewBox="0 0 10 8" fill="none" stroke="#e0e0e0" stroke-width="1"><rect x="0.500" y="0.500" width="9" height="9"/><path d="M3.500 0.500v8M6.500 0.500v8M0.500 3.500h9M0.500 6.500h9"/></svg>
<svg class="r" style="left:843px;top:517px" width="11" height="8" viewBox="0 0 11 8" fill="none" stroke="#d8d8d8" stroke-width="0.900"><rect x="0.500" y="0.500" width="10" height="9"/><rect x="2.500" y="2.500" width="6" height="6"/></svg>
<svg class="r" style="left:873px;top:517px" width="11" height="8" viewBox="0 0 11 8" fill="none" stroke="#d8d8d8" stroke-width="0.900"><rect x="0.500" y="0.500" width="10" height="9"/><path d="M4 0.500v8M7.500 0.500v8"/></svg>
<div class="r" style="left:898.40px;top:521.20px;width:5.60px;height:1.00px;background:#cfcfcf;"></div>
<div class="r" style="left:907.50px;top:521.40px;width:75.70px;height:0.70px;background:#8a8a8a;"></div>
<div class="r" style="left:945.30px;top:520.00px;width:0.70px;height:3.00px;background:#8a8a8a;"></div>
<div class="r" style="left:931.20px;top:518.50px;width:4.00px;height:4.50px;background:#d8d8d8;"></div>
<div class="r" style="left:986.70px;top:521.20px;width:5.10px;height:1.00px;background:#cfcfcf;"></div>
<div class="r" style="left:988.80px;top:519.00px;width:1.00px;height:4.00px;background:#cfcfcf;"></div>
<span class="t" style="left:1002.00px;top:517.43px;font-size:9px;line-height:10.80px;color:#d6d6d6;transform:scaleX(0.8882);transform-origin:0 50%;">70%</span>
</div>
<!-- gen_ribbon -->
<div class="ui">
<svg class="r" style="left:21px;top:55px" width="23" height="25" viewBox="0 0 23 25" ><path d="M4.800 4.600h-2.600a.6.600 0 0 0-.6.600v15.400a.6.600 0 0 0 .6.600h8.500" fill="none" stroke="#ee8a22" stroke-width="1.500"/><path d="M13.200 4.600h2.600a.6.600 0 0 1 .6.600v3.800" fill="none" stroke="#ee8a22" stroke-width="1.500"/><path d="M4.800 6.800v-2.400h2.200l2-3.200 2 3.200h2.200v2.400z" fill="#292929" stroke="#dcdcdc" stroke-width="0.900" stroke-linejoin="round"/><rect x="11.300" y="10.400" width="10.500" height="13" rx="0.800" fill="#292929" stroke="#e0e0e0" stroke-width="1.100"/></svg>
<span class="t" style="left:20.00px;top:82.09px;font-size:10.4px;line-height:12.48px;color:#e4e4e4;transform:scaleX(0.8272);transform-origin:0 50%;">Paste</span>
<svg class="r" style="left:27.40px;top:97.45px" width="6.2" height="4.1" viewBox="-1 -1 6.2 4.1" fill="none" stroke="#dcdcdc" stroke-width="1.25" stroke-linecap="round" stroke-linejoin="round"><path d="M0 0l2.1 2.1l2.1 -2.1"/></svg>
<svg class="r" style="left:52px;top:55px" width="10" height="14" viewBox="0 0 10 14" ><path d="M2.800 0.500l3.200 8.300M7.200 0.500l-3.200 8.300" stroke="#d8d8d8" stroke-width="0.900" fill="none"/><circle cx="2.800" cy="10.600" r="1.500" fill="#3f7fd0"/><circle cx="7.200" cy="10.600" r="1.500" fill="#3f7fd0"/></svg>
<svg class="r" style="left:50px;top:74px" width="14" height="14" viewBox="0 0 14 14" ><rect x="0.800" y="0.800" width="6.500" height="10" rx="0.800" fill="none" stroke="#d0d0d0" stroke-width="0.900"/><path d="M5.600 2.800h4.600l2.800 2.800v7.200h-7.400z" fill="#292929" stroke="#dcdcdc" stroke-width="0.900" stroke-linejoin="round"/><path d="M8 8.500h2.500v2.500h-2.500z" fill="#6a6a6a"/></svg>
<svg class="r" style="left:67.90px;top:79.45px" width="6.2" height="4.1" viewBox="-1 -1 6.2 4.1" fill="none" stroke="#dcdcdc" stroke-width="1.25" stroke-linecap="round" stroke-linejoin="round"><path d="M0 0l2.1 2.1l2.1 -2.1"/></svg>
<svg class="r" style="left:51px;top:93px" width="13" height="14" viewBox="0 0 13 14" ><path d="M11.500 1.200l-4.200 4.200" stroke="#dcdcdc" stroke-width="2" stroke-linecap="round" fill="none"/><path d="M5 4.800l3.800 3.800-1.400 4.200-6.200-4.800z" fill="#292929" stroke="#dcdcdc" stroke-width="0.900" stroke-linejoin="round"/><circle cx="5" cy="10" r="1" fill="#ee8a22"/></svg>
<span class="t" style="left:21.00px;top:112.22px;font-size:9.4px;line-height:11.28px;color:#e4e4e4;transform:scaleX(0.9569);transform-origin:0 50%;">Clipboard</span>
<svg class="r" style="left:75px;top:114px" width="7" height="7" viewBox="0 0 7 7" fill="none" stroke="#bdbdbd" stroke-width="0.9"><path d="M0.500 5.500v-5h5" /><path d="M2.500 2.500l3.500 3.500M6 3.500v2.500h-2.500"/></svg>
<div class="r" style="left:90.00px;top:58.00px;width:91.50px;height:18.50px;background:#262626;border-radius:3px;border:1px solid #4a4a4a;box-sizing:border-box;"></div>
<span class="t" style="left:92.50px;top:61.79px;font-size:10.4px;line-height:12.48px;color:#e4e4e4;transform:scaleX(0.8411);transform-origin:0 50%;">Arial</span>
<svg class="r" style="left:174.00px;top:65.50px" width="6" height="4.0" viewBox="-1 -1 6 4.0" fill="none" stroke="#dcdcdc" stroke-width="1.25" stroke-linecap="round" stroke-linejoin="round"><path d="M0 0l2.0 2.0l2.0 -2.0"/></svg>
<div class="r" style="left:184.00px;top:58.00px;width:31.50px;height:18.50px;background:#262626;border-radius:3px;border:1px solid #4a4a4a;box-sizing:border-box;"></div>
<span class="t" style="left:186.18px;top:61.79px;font-size:10.4px;line-height:12.48px;color:#e4e4e4;transform:scaleX(0.8000);transform-origin:0 50%;">11</span>
<svg class="r" style="left:208.00px;top:65.50px" width="6" height="4.0" viewBox="-1 -1 6 4.0" fill="none" stroke="#dcdcdc" stroke-width="1.25" stroke-linecap="round" stroke-linejoin="round"><path d="M0 0l2.0 2.0l2.0 -2.0"/></svg>
<span class="t" style="left:221.50px;top:59.61px;font-size:13px;line-height:15.60px;color:#e4e4e4;transform:scaleX(0.9803);transform-origin:0 50%;">A</span>
<svg class="r" style="left:229px;top:60px" width="4" height="3" viewBox="0 0 4 3" ><path d="M0.300 2.500l1.700-1.800 1.700 1.800" fill="none" stroke="#4d8fd6" stroke-width="0.900"/></svg>
<span class="t" style="left:241.50px;top:61.47px;font-size:11px;line-height:13.20px;color:#e4e4e4;transform:scaleX(0.9541);transform-origin:0 50%;">A</span>
<svg class="r" style="left:247.5px;top:61px" width="4" height="3" viewBox="0 0 4 3" ><path d="M0.300 0.500l1.700 1.800 1.700-1.800" fill="none" stroke="#4d8fd6" stroke-width="0.900"/></svg>
<span class="t" style="left:96.00px;top:85.48px;font-size:10.8px;line-height:12.96px;color:#e4e4e4;font-weight:bold;transform:scaleX(0.8334);transform-origin:0 50%;">B</span>
<span class="t" style="left:116.50px;top:85.37px;font-size:11px;line-height:13.20px;color:#e4e4e4;font-style:italic;font-family:'Liberation Serif',serif;transform:scaleX(0.9555);transform-origin:0 50%;">I</span>
<span class="t" style="left:134.00px;top:85.29px;font-size:10.4px;line-height:12.48px;color:#e4e4e4;transform:scaleX(0.9320);transform-origin:0 50%;">U</span>
<div class="r" style="left:134.00px;top:96.30px;width:7.00px;height:1.00px;background:#e4e4e4;"></div>
<svg class="r" style="left:148.50px;top:89.70px" width="6" height="4.0" viewBox="-1 -1 6 4.0" fill="none" stroke="#dcdcdc" stroke-width="1.25" stroke-linecap="round" stroke-linejoin="round"><path d="M0 0l2.0 2.0l2.0 -2.0"/></svg>
<div class="r" style="left:159.50px;top:83.00px;width:1.00px;height:17.00px;background:#454545;"></div>
<svg class="r" style="left:165px;top:85px" width="12" height="12" viewBox="0 0 12 12" ><rect x="0.500" y="0.500" width="11" height="11" fill="none" stroke="#d0d0d0" stroke-width="1"/><path d="M6 0.500v11M0.500 6h11" stroke="#d0d0d0" stroke-width="1"/></svg>
<svg class="r" style="left:182.00px;top:89.70px" width="6" height="4.0" viewBox="-1 -1 6 4.0" fill="none" stroke="#dcdcdc" stroke-width="1.25" stroke-linecap="round" stroke-linejoin="round"><path d="M0 0l2.0 2.0l2.0 -2.0"/></svg>
<div class="r" style="left:192.50px;top:83.00px;width:1.00px;height:17.00px;background:#454545;"></div>
<svg class="r" style="left:198px;top:84px" width="13" height="14" viewBox="0 0 13 14" ><path d="M5.500 1.500l4.500 4.500-4 3.500-4-3.500z" fill="none" stroke="#d8d8d8" stroke-width="1"/><path d="M3.500 3.500l2-2" stroke="#d8d8d8" stroke-width="1"/><path d="M10.500 6.500c.8 1 1.200 1.700 1.200 2.200a1.100 1.100 0 0 1-2.200 0c0-.5.400-1.200 1-2.200z" fill="#d8d8d8"/><rect x="0.500" y="10.800" width="12" height="2.700" fill="#f3c23c"/></svg>
<svg class="r" style="left:215.00px;top:89.70px" width="6" height="4.0" viewBox="-1 -1 6 4.0" fill="none" stroke="#dcdcdc" stroke-width="1.25" stroke-linecap="round" stroke-linejoin="round"><path d="M0 0l2.0 2.0l2.0 -2.0"/></svg>
<span class="t" style="left:230.23px;top:82.97px;font-size:11.0px;line-height:13.20px;color:#e4e4e4;letter-spacing:1.200px;">A</span>
<div class="r" style="left:229.00px;top:94.20px;width:11.50px;height:2.40px;background:#ec7a2e;"></div>
<svg class="r" style="left:245.50px;top:89.70px" width="6" height="4.0" viewBox="-1 -1 6 4.0" fill="none" stroke="#dcdcdc" stroke-width="1.25" stroke-linecap="round" stroke-linejoin="round"><path d="M0 0l2.0 2.0l2.0 -2.0"/></svg>
<span class="t" style="left:157.00px;top:112.22px;font-size:9.4px;line-height:11.28px;color:#e4e4e4;transform:scaleX(0.9836);transform-origin:0 50%;">Font</span>
<svg class="r" style="left:251.5px;top:114px" width="7" height="7" viewBox="0 0 7 7" fill="none" stroke="#bdbdbd" stroke-width="0.9"><path d="M0.500 5.500v-5h5" /><path d="M2.500 2.500l3.500 3.500M6 3.500v2.500h-2.500"/></svg>
<div class="r" style="left:270.00px;top:61.20px;width:11.00px;height:1.00px;background:#cdcdcd;"></div><div class="r" style="left:271.50px;top:64.60px;width:8.00px;height:1.00px;background:#cdcdcd;"></div><div class="r" style="left:270.00px;top:68.00px;width:11.00px;height:1.00px;background:#cdcdcd;"></div>
<div class="r" style="left:290.00px;top:63.30px;width:11.00px;height:1.00px;background:#cdcdcd;"></div><div class="r" style="left:291.50px;top:66.70px;width:8.00px;height:1.00px;background:#cdcdcd;"></div><div class="r" style="left:290.00px;top:70.10px;width:11.00px;height:1.00px;background:#cdcdcd;"></div>
<div class="r" style="left:306.00px;top:58.50px;width:17.50px;height:18.00px;background:#3a3a3a;border-radius:3px;border:1px solid #9a9a9a;box-sizing:border-box;"></div>
<div class="r" style="left:309.50px;top:66.20px;width:11.00px;height:1.00px;background:#cdcdcd;"></div><div class="r" style="left:311.00px;top:69.30px;width:8.00px;height:1.00px;background:#cdcdcd;"></div><div class="r" style="left:309.50px;top:72.40px;width:11.00px;height:1.00px;background:#cdcdcd;"></div>
<div class="r" style="left:325.00px;top:59.00px;width:1.00px;height:17.00px;background:#454545;"></div>
<svg class="r" style="left:330px;top:59px" width="14" height="14" viewBox="0 0 14 14" ><path d="M2.500 12.500l9-9M11.500 3.500h-3M11.500 3.500v3" fill="none" stroke="#4d8fd6" stroke-width="1.100"/><text x="0" y="6.500" font-size="6" fill="#d8d8d8" font-family="Liberation Sans, sans-serif" transform="rotate(-35 3 5)">ab</text></svg>
<svg class="r" style="left:346.00px;top:65.50px" width="6" height="4.0" viewBox="-1 -1 6 4.0" fill="none" stroke="#dcdcdc" stroke-width="1.25" stroke-linecap="round" stroke-linejoin="round"><path d="M0 0l2.0 2.0l2.0 -2.0"/></svg>
<div class="r" style="left:359.00px;top:59.00px;width:1.00px;height:17.00px;background:#454545;"></div>
<svg class="r" style="left:365px;top:63px" width="11" height="9" viewBox="0 0 11 9" ><path d="M0.800 1.800l2.500 2.400-2.500 2.400" fill="none" stroke="#4d8fd6" stroke-width="1"/><text x="4.500" y="7.500" font-size="8" fill="#d8d8d8" font-family="Liberation Sans, sans-serif">¶</text></svg>
<svg class="r" style="left:381.00px;top:65.50px" width="6" height="4.0" viewBox="-1 -1 6 4.0" fill="none" stroke="#dcdcdc" stroke-width="1.25" stroke-linecap="round" stroke-linejoin="round"><path d="M0 0l2.0 2.0l2.0 -2.0"/></svg>
<div class="r" style="left:395.00px;top:58.00px;width:1.00px;height:46.00px;background:#454545;"></div>
<svg class="r" style="left:404px;top:61px" width="12" height="14" viewBox="0 0 12 14" ><text x="0.500" y="6" font-size="7" fill="#d8d8d8" font-family="Liberation Sans, sans-serif">ab</text><text x="0.500" y="12.500" font-size="7" fill="#d8d8d8" font-family="Liberation Sans, sans-serif">c</text><path d="M9.500 3v6.500h-4M7 7.800l-1.800 1.700 1.800 1.700" fill="none" stroke="#4d8fd6" stroke-width="1"/></svg>
<span class="t" style="left:418.00px;top:62.29px;font-size:10.4px;line-height:12.48px;color:#e4e4e4;transform:scaleX(0.8399);transform-origin:0 50%;">Wrap Text</span>
<div class="r" style="left:270.00px;top:85.50px;width:11.00px;height:1.00px;background:#cdcdcd;"></div><div class="r" style="left:270.00px;top:88.70px;width:8.00px;height:1.00px;background:#cdcdcd;"></div><div class="r" style="left:270.00px;top:91.90px;width:11.00px;height:1.00px;background:#cdcdcd;"></div><div class="r" style="left:270.00px;top:95.10px;width:8.00px;height:1.00px;background:#cdcdcd;"></div>
<div class="r" style="left:290.00px;top:85.50px;width:11.00px;height:1.00px;background:#cdcdcd;"></div><div class="r" style="left:292.00px;top:88.70px;width:7.00px;height:1.00px;background:#cdcdcd;"></div><div class="r" style="left:290.00px;top:91.90px;width:11.00px;height:1.00px;background:#cdcdcd;"></div><div class="r" style="left:292.00px;top:95.10px;width:7.00px;height:1.00px;background:#cdcdcd;"></div>
<div class="r" style="left:310.00px;top:85.50px;width:11.00px;height:1.00px;background:#cdcdcd;"></div><div class="r" style="left:313.00px;top:88.70px;width:8.00px;height:1.00px;background:#cdcdcd;"></div><div class="r" style="left:310.00px;top:91.90px;width:11.00px;height:1.00px;background:#cdcdcd;"></div><div class="r" style="left:313.00px;top:95.10px;width:8.00px;height:1.00px;background:#cdcdcd;"></div>
<div class="r" style="left:325.00px;top:83.00px;width:1.00px;height:17.00px;background:#454545;"></div>
<div class="r" style="left:331.00px;top:85.50px;width:11.00px;height:1.00px;background:#cdcdcd;"></div><div class="r" style="left:336.00px;top:88.70px;width:6.00px;height:1.00px;background:#cdcdcd;"></div><div class="r" style="left:336.00px;top:91.90px;width:6.00px;height:1.00px;background:#cdcdcd;"></div><div class="r" style="left:331.00px;top:95.10px;width:11.00px;height:1.00px;background:#cdcdcd;"></div>
<svg class="r" style="left:331px;top:88.6px" width="5" height="6" viewBox="0 0 5 6" ><path d="M4.500 3h-4M2 1.200l-1.800 1.800 1.800 1.800" fill="none" stroke="#4d8fd6" stroke-width="0.900"/></svg>
<div class="r" style="left:350.00px;top:85.50px;width:11.00px;height:1.00px;background:#cdcdcd;"></div><div class="r" style="left:355.00px;top:88.70px;width:6.00px;height:1.00px;background:#cdcdcd;"></div><div class="r" style="left:355.00px;top:91.90px;width:6.00px;height:1.00px;background:#cdcdcd;"></div><div class="r" style="left:350.00px;top:95.10px;width:11.00px;height:1.00px;background:#cdcdcd;"></div>
<svg class="r" style="left:350px;top:88.6px" width="5" height="6" viewBox="0 0 5 6" ><path d="M0.500 3h4M3 1.200l1.800 1.800-1.800 1.800" fill="none" stroke="#4d8fd6" stroke-width="0.900"/></svg>
<svg class="r" style="left:403px;top:85px" width="13" height="13" viewBox="0 0 13 13" ><rect x="0.500" y="0.500" width="12" height="12" fill="none" stroke="#d0d0d0" stroke-width="1"/><path d="M0.500 3.500h12M0.500 9.500h12M4.500 0.500v3M8.500 0.500v3M4.500 9.500v3M8.500 9.500v3" stroke="#d0d0d0" stroke-width="0.800"/><rect x="1" y="4" width="11" height="5" fill="#25405f"/><path d="M2.500 6.500h8M4 5l-1.500 1.500 1.500 1.500M9 5l1.500 1.500-1.500 1.500" fill="none" stroke="#8cc0f4" stroke-width="0.800"/></svg>
<span class="t" style="left:418.00px;top:86.49px;font-size:10.4px;line-height:12.48px;color:#e4e4e4;transform:scaleX(0.8718);transform-origin:0 50%;">Merge &amp; Center</span>
<svg class="r" style="left:490.50px;top:90.00px" width="6" height="4.0" viewBox="-1 -1 6 4.0" fill="none" stroke="#dcdcdc" stroke-width="1.25" stroke-linecap="round" stroke-linejoin="round"><path d="M0 0l2.0 2.0l2.0 -2.0"/></svg>
<span class="t" style="left:357.50px;top:112.22px;font-size:9.4px;line-height:11.28px;color:#e4e4e4;transform:scaleX(0.9569);transform-origin:0 50%;">Alignment</span>
<svg class="r" style="left:497px;top:114px" width="7" height="7" viewBox="0 0 7 7" fill="none" stroke="#bdbdbd" stroke-width="0.9"><path d="M0.500 5.500v-5h5" /><path d="M2.500 2.500l3.500 3.500M6 3.500v2.500h-2.500"/></svg>
<div class="r" style="left:513.00px;top:58.00px;width:108.50px;height:18.50px;background:#262626;border-radius:3px;border:1px solid #4a4a4a;box-sizing:border-box;"></div>
<span class="t" style="left:515.00px;top:61.79px;font-size:10.4px;line-height:12.48px;color:#e4e4e4;transform:scaleX(0.8108);transform-origin:0 50%;">General</span>
<svg class="r" style="left:614.00px;top:65.50px" width="6" height="4.0" viewBox="-1 -1 6 4.0" fill="none" stroke="#dcdcdc" stroke-width="1.25" stroke-linecap="round" stroke-linejoin="round"><path d="M0 0l2.0 2.0l2.0 -2.0"/></svg>
<span class="t" style="left:517.00px;top:84.11px;font-size:13px;line-height:15.60px;color:#e4e4e4;letter-spacing:0.270px;text-shadow:none;">$</span>
<svg class="r" style="left:532.50px;top:90.00px" width="6" height="4.0" viewBox="-1 -1 6 4.0" fill="none" stroke="#dcdcdc" stroke-width="1.25" stroke-linecap="round" stroke-linejoin="round"><path d="M0 0l2.0 2.0l2.0 -2.0"/></svg>
<span class="t" style="left:546.00px;top:83.84px;font-size:13.5px;line-height:16.20px;color:#e4e4e4;letter-spacing:0.496px;text-shadow:none;">%</span>
<span class="t" style="left:566.75px;top:57.32px;font-size:36px;line-height:43.20px;color:#e4e4e4;font-weight:bold;text-shadow:none;">,</span>
<div class="r" style="left:582.50px;top:83.00px;width:1.00px;height:17.00px;background:#454545;"></div>
<svg class="r" style="left:587px;top:85px" width="13" height="12" viewBox="0 0 13 12" ><text x="7.500" y="5.600" font-size="6.400" fill="#d0d0d0" font-family="Liberation Sans, sans-serif">0</text><text x="2.800" y="12" font-size="6.400" fill="#d0d0d0" font-family="Liberation Sans, sans-serif">.00</text><path d="M5.500 3h-4.500M2.500 1.300l-1.700 1.700 1.700 1.700" fill="none" stroke="#4d8fd6" stroke-width="0.900"/></svg>
<svg class="r" style="left:607px;top:85px" width="13" height="12" viewBox="0 0 13 12" ><text x="3.200" y="5.600" font-size="6.400" fill="#d0d0d0" font-family="Liberation Sans, sans-serif">.00</text><text x="8.500" y="12" font-size="6.400" fill="#d0d0d0" font-family="Liberation Sans, sans-serif">0</text><path d="M1 9.500h5M4.300 7.800l1.700 1.700-1.700 1.700" fill="none" stroke="#4d8fd6" stroke-width="0.900"/></svg>
<span class="t" style="left:545.50px;top:112.22px;font-size:9.4px;line-height:11.28px;color:#e4e4e4;transform:scaleX(0.9272);transform-origin:0 50%;">Number</span>
<svg class="r" style="left:619px;top:114px" width="7" height="7" viewBox="0 0 7 7" fill="none" stroke="#bdbdbd" stroke-width="0.9"><path d="M0.500 5.500v-5h5" /><path d="M2.500 2.500l3.500 3.500M6 3.500v2.500h-2.500"/></svg>
<svg class="r" style="left:651px;top:58px" width="22" height="18" viewBox="0 0 22 18" ><rect x="0.500" y="0.500" width="21" height="17" fill="none" stroke="#d0d0d0" stroke-width="1"/><path d="M0.500 6h21M0.500 12h21M4.500 0.500v17M14.500 0.500v17M18 0.500v17" stroke="#d0d0d0" stroke-width="0.800"/><rect x="5" y="1" width="9" height="5" fill="#e8762c"/><rect x="5" y="6.500" width="5.500" height="5" fill="#3d7cc9"/><rect x="5" y="12.500" width="9" height="4.500" fill="#e8762c"/></svg>
<span class="t" style="left:638.50px;top:81.79px;font-size:10.4px;line-height:12.48px;color:#e4e4e4;transform:scaleX(0.9032);transform-origin:0 50%;">Conditional</span>
<span class="t" style="left:635.50px;top:93.79px;font-size:10.4px;line-height:12.48px;color:#e4e4e4;transform:scaleX(0.8953);transform-origin:0 50%;">Formatting</span>
<svg class="r" style="left:682.50px;top:97.70px" width="6" height="4.0" viewBox="-1 -1 6 4.0" fill="none" stroke="#dcdcdc" stroke-width="1.25" stroke-linecap="round" stroke-linejoin="round"><path d="M0 0l2.0 2.0l2.0 -2.0"/></svg>
<svg class="r" style="left:702px;top:58px" width="24" height="20" viewBox="0 0 24 20" ><rect x="0.500" y="0.500" width="20" height="15.500" fill="none" stroke="#d0d0d0" stroke-width="1"/><path d="M0.500 5.500h20M0.500 10.500h20M7 0.500v15.500M14 0.500v15.500" stroke="#d0d0d0" stroke-width="0.800"/><rect x="7.500" y="6" width="13" height="10" fill="#3d7cc9"/><path d="M24.500 6.200l-8.300 8.600" stroke="#d8d8d8" stroke-width="3.200" stroke-linecap="round"/><path d="M24.500 6.200l-8.300 8.600" stroke="#292929" stroke-width="1.500" stroke-linecap="round"/><path d="M15.800 13c-2.600-.4-3.800 1.800-6.800 5.500 3.600.9 7.600-.6 8.600-3.600z" fill="#5b9ae0"/></svg>
<span class="t" style="left:693.50px;top:81.79px;font-size:10.4px;line-height:12.48px;color:#e4e4e4;transform:scaleX(0.8331);transform-origin:0 50%;">Format as</span>
<span class="t" style="left:699.80px;top:93.79px;font-size:10.4px;line-height:12.48px;color:#e4e4e4;transform:scaleX(0.8000);transform-origin:0 50%;">Table</span>
<svg class="r" style="left:720.70px;top:97.70px" width="6" height="4.0" viewBox="-1 -1 6 4.0" fill="none" stroke="#dcdcdc" stroke-width="1.25" stroke-linecap="round" stroke-linejoin="round"><path d="M0 0l2.0 2.0l2.0 -2.0"/></svg>
<svg class="r" style="left:742px;top:58px" width="25" height="20" viewBox="0 0 25 20" ><rect x="0.500" y="0.500" width="20" height="15.500" fill="none" stroke="#d0d0d0" stroke-width="1"/><path d="M0.500 4.500h20M4.500 0.500v15.500" stroke="#d0d0d0" stroke-width="0.800"/><rect x="5" y="5" width="15.500" height="8" fill="#3d7cc9"/><path d="M24.500 6.200l-8.300 8.600" stroke="#d8d8d8" stroke-width="3.200" stroke-linecap="round"/><path d="M24.500 6.200l-8.300 8.600" stroke="#292929" stroke-width="1.500" stroke-linecap="round"/><path d="M15.800 13c-2.600-.4-3.800 1.800-6.800 5.500 3.600.9 7.600-.6 8.600-3.600z" fill="#5b9ae0"/></svg>
<span class="t" style="left:745.50px;top:81.79px;font-size:10.4px;line-height:12.48px;color:#e4e4e4;transform:scaleX(0.8931);transform-origin:0 50%;">Cell</span>
<span class="t" style="left:737.50px;top:93.79px;font-size:10.4px;line-height:12.48px;color:#e4e4e4;transform:scaleX(0.8474);transform-origin:0 50%;">Styles</span>
<svg class="r" style="left:762.50px;top:97.70px" width="6" height="4.0" viewBox="-1 -1 6 4.0" fill="none" stroke="#dcdcdc" stroke-width="1.25" stroke-linecap="round" stroke-linejoin="round"><path d="M0 0l2.0 2.0l2.0 -2.0"/></svg>
<span class="t" style="left:691.50px;top:112.22px;font-size:9.4px;line-height:11.28px;color:#e4e4e4;transform:scaleX(0.8595);transform-origin:0 50%;">Styles</span>
<svg class="r" style="left:785px;top:56px" width="13" height="12" viewBox="0 0 13 12" ><rect x="0.500" y="0.500" width="12" height="10.500" fill="none" stroke="#d0d0d0" stroke-width="0.900" stroke-dasharray="2 1"/><path d="M0.500 4h12M0.500 7.500h12M4.500 0.500v10.500M8.500 0.500v10.500" stroke="#d0d0d0" stroke-width="0.600"/><rect x="4" y="3.500" width="8.500" height="4.500" fill="#3d7cc9"/><path d="M4.500 5.800h-4M2.300 4.200l-1.800 1.600 1.800 1.600" fill="none" stroke="#8cc0f4" stroke-width="0.900"/></svg>
<span class="t" style="left:801.00px;top:56.29px;font-size:10.4px;line-height:12.48px;color:#e4e4e4;transform:scaleX(0.8266);transform-origin:0 50%;">Insert</span>
<svg class="r" style="left:830.50px;top:60.00px" width="6" height="4.0" viewBox="-1 -1 6 4.0" fill="none" stroke="#dcdcdc" stroke-width="1.25" stroke-linecap="round" stroke-linejoin="round"><path d="M0 0l2.0 2.0l2.0 -2.0"/></svg>
<svg class="r" style="left:785px;top:75px" width="13" height="12" viewBox="0 0 13 12" ><rect x="0.500" y="0.500" width="12" height="10.500" fill="none" stroke="#d0d0d0" stroke-width="0.900" stroke-dasharray="2 1"/><path d="M0.500 4h12M0.500 7.500h12M4.500 0.500v10.500M8.500 0.500v10.500" stroke="#d0d0d0" stroke-width="0.600"/><rect x="1" y="3.500" width="8" height="4.500" fill="#3d7cc9"/><path d="M5 3.800l3.500 3.800M8.500 3.800l-3.500 3.800" fill="none" stroke="#e86a4c" stroke-width="1"/></svg>
<span class="t" style="left:801.00px;top:75.99px;font-size:10.4px;line-height:12.48px;color:#e4e4e4;transform:scaleX(0.8316);transform-origin:0 50%;">Delete</span>
<svg class="r" style="left:834.00px;top:79.70px" width="6" height="4.0" viewBox="-1 -1 6 4.0" fill="none" stroke="#dcdcdc" stroke-width="1.25" stroke-linecap="round" stroke-linejoin="round"><path d="M0 0l2.0 2.0l2.0 -2.0"/></svg>
<svg class="r" style="left:785px;top:94px" width="13" height="13" viewBox="0 0 13 13" ><rect x="0.500" y="0.500" width="12" height="12" fill="none" stroke="#d0d0d0" stroke-width="0.900" stroke-dasharray="2 1"/><rect x="3.500" y="3.500" width="6.500" height="6" fill="#3d7cc9"/><path d="M3 0.500v12M10.500 0.500v12M0.500 3h12M0.500 10h12" stroke="#d0d0d0" stroke-width="0.600"/></svg>
<span class="t" style="left:801.00px;top:95.49px;font-size:10.4px;line-height:12.48px;color:#e4e4e4;transform:scaleX(0.8197);transform-origin:0 50%;">Format</span>
<svg class="r" style="left:831.00px;top:99.30px" width="6" height="4.0" viewBox="-1 -1 6 4.0" fill="none" stroke="#dcdcdc" stroke-width="1.25" stroke-linecap="round" stroke-linejoin="round"><path d="M0 0l2.0 2.0l2.0 -2.0"/></svg>
<span class="t" style="left:804.50px;top:112.22px;font-size:9.4px;line-height:11.28px;color:#e4e4e4;transform:scaleX(0.8137);transform-origin:0 50%;">Cells</span>
<svg class="r" style="left:860px;top:56px" width="11" height="12" viewBox="0 0 11 12" ><path d="M9.500 2.500v-1.500h-8.500l4.500 5-4.500 5h8.500v-1.500" fill="none" stroke="#d8d8d8" stroke-width="1.100"/></svg>
<svg class="r" style="left:876.00px;top:60.00px" width="6" height="4.0" viewBox="-1 -1 6 4.0" fill="none" stroke="#dcdcdc" stroke-width="1.25" stroke-linecap="round" stroke-linejoin="round"><path d="M0 0l2.0 2.0l2.0 -2.0"/></svg>
<svg class="r" style="left:859px;top:75px" width="13" height="12" viewBox="0 0 13 12" ><rect x="0.500" y="0.500" width="12" height="10.500" fill="none" stroke="#d0d0d0" stroke-width="1"/><path d="M0.500 3h12" stroke="#d0d0d0" stroke-width="0.900"/><path d="M6.500 4.500v4.500M4.500 7.200l2 2 2-2" fill="none" stroke="#4d8fd6" stroke-width="1"/></svg>
<svg class="r" style="left:874.50px;top:79.70px" width="6" height="4.0" viewBox="-1 -1 6 4.0" fill="none" stroke="#dcdcdc" stroke-width="1.25" stroke-linecap="round" stroke-linejoin="round"><path d="M0 0l2.0 2.0l2.0 -2.0"/></svg>
<svg class="r" style="left:859px;top:95px" width="13" height="11" viewBox="0 0 13 11" ><path d="M7.500 0.800l4.700 4.200-5 5.200h-3l-3.400-3z" fill="none" stroke="#d8d8d8" stroke-width="1"/><path d="M3.500 4.500l4.500 4" stroke="#d8d8d8" stroke-width="0.900"/></svg>
<svg class="r" style="left:874.50px;top:99.30px" width="6" height="4.0" viewBox="-1 -1 6 4.0" fill="none" stroke="#dcdcdc" stroke-width="1.25" stroke-linecap="round" stroke-linejoin="round"><path d="M0 0l2.0 2.0l2.0 -2.0"/></svg>
<svg class="r" style="left:892px;top:56px" width="24" height="22" viewBox="0 0 24 22" ><text x="0.500" y="9" font-size="10" fill="#4d8fd6" font-family="Liberation Sans, sans-serif">A</text><text x="0.500" y="20" font-size="10" fill="#d8d8d8" font-family="Liberation Sans, sans-serif">Z</text><path d="M9.500 6h13l-5 5.500v5.500l-3 0v-5.500z" fill="none" stroke="#d8d8d8" stroke-width="1.100" stroke-linejoin="round"/></svg>
<span class="t" style="left:890.50px;top:81.79px;font-size:10.4px;line-height:12.48px;color:#e4e4e4;transform:scaleX(0.8824);transform-origin:0 50%;">Sort &amp;</span>
<span class="t" style="left:889.50px;top:93.79px;font-size:10.4px;line-height:12.48px;color:#e4e4e4;transform:scaleX(0.8870);transform-origin:0 50%;">Filter</span>
<svg class="r" style="left:910.50px;top:97.70px" width="6" height="4.0" viewBox="-1 -1 6 4.0" fill="none" stroke="#dcdcdc" stroke-width="1.25" stroke-linecap="round" stroke-linejoin="round"><path d="M0 0l2.0 2.0l2.0 -2.0"/></svg>
<svg class="r" style="left:926px;top:56px" width="24" height="23" viewBox="0 0 24 23" ><circle cx="15" cy="8.500" r="7.500" fill="none" stroke="#d8d8d8" stroke-width="1.100"/><path d="M9.500 14l-8.500 8" stroke="#d8d8d8" stroke-width="1.200"/></svg>
<span class="t" style="left:924.50px;top:81.79px;font-size:10.4px;line-height:12.48px;color:#e4e4e4;transform:scaleX(0.9149);transform-origin:0 50%;">Find &amp;</span>
<span class="t" style="left:922.50px;top:93.79px;font-size:10.4px;line-height:12.48px;color:#e4e4e4;transform:scaleX(0.8822);transform-origin:0 50%;">Select</span>
<svg class="r" style="left:948.00px;top:97.70px" width="6" height="4.0" viewBox="-1 -1 6 4.0" fill="none" stroke="#dcdcdc" stroke-width="1.25" stroke-linecap="round" stroke-linejoin="round"><path d="M0 0l2.0 2.0l2.0 -2.0"/></svg>
<span class="t" style="left:892.00px;top:112.22px;font-size:9.4px;line-height:11.28px;color:#e4e4e4;transform:scaleX(0.9394);transform-origin:0 50%;">Editing</span>
<svg class="r" style="left:1003.50px;top:112.00px" width="8" height="5.0" viewBox="-1 -1 8 5.0" fill="none" stroke="#dcdcdc" stroke-width="1.25" stroke-linecap="round" stroke-linejoin="round"><path d="M0 0l3.0 3.0l3.0 -3.0"/></svg>
</div>
<!-- gen_cells -->
<div class="sh">
<div class="r" style="left:17.00px;top:164.60px;width:181.00px;height:9.73px;background:#dce4f3;border-bottom:1px solid #8eaadb;box-sizing:border-box;"></div>
<div class="r" style="left:17.00px;top:213.25px;width:181.00px;height:9.73px;background:#dce4f3;border-bottom:1px solid #8eaadb;box-sizing:border-box;"></div>
<div class="r" style="left:17.00px;top:174.83px;width:180.50px;height:28.19px;background:#fff;"></div>
<div class="r" style="left:17.00px;top:223.48px;width:180.50px;height:37.92px;background:#fff;"></div>
<div class="r" style="left:17.00px;top:320.78px;width:375.90px;height:135.72px;background:#fff;"></div>
<span class="t" style="left:19.50px;top:164.51px;font-size:8.5px;line-height:10.20px;color:#000;letter-spacing:0.164px;font-weight:bold;text-shadow:none;">state</span>
<div class="r" style="left:46.30px;top:165.40px;width:8.20px;height:8.00px;background:#f6f6f6;border:0.7px solid #a9a9a9;box-sizing:border-box;border-radius:1px;"></div><svg class="r" style="left:48.5px;top:168.6px" width="4" height="3" viewBox="0 0 4 3"><path d="M0 0.300h4l-2 2.400z" fill="#444"/></svg>
<span class="t" style="left:18.80px;top:213.16px;font-size:8.5px;line-height:10.20px;color:#000;letter-spacing:-0.100px;font-weight:bold;width:36.3px;overflow:hidden;text-shadow:none;">custom</span>
<div class="r" style="left:46.30px;top:214.05px;width:8.20px;height:8.00px;background:#f6f6f6;border:0.7px solid #a9a9a9;box-sizing:border-box;border-radius:1px;"></div><svg class="r" style="left:48.5px;top:217.25px" width="4" height="3" viewBox="0 0 4 3"><path d="M0 0.300h4l-2 2.400z" fill="#444"/></svg>
<span class="t" style="left:58.00px;top:164.51px;font-size:8.5px;line-height:10.20px;color:#000;letter-spacing:0.148px;font-weight:bold;text-shadow:none;">Count of Order No</span>
<span class="t" style="left:142.00px;top:164.51px;font-size:8.5px;line-height:10.20px;color:#000;letter-spacing:0.242px;font-weight:bold;text-shadow:none;">Sum of Total</span>
<span class="t" style="left:58.00px;top:213.16px;font-size:8.5px;line-height:10.20px;color:#000;letter-spacing:0.148px;font-weight:bold;text-shadow:none;">Count of Order No</span>
<span class="t" style="left:142.00px;top:213.16px;font-size:8.5px;line-height:10.20px;color:#000;letter-spacing:0.242px;font-weight:bold;text-shadow:none;">Sum of Total</span>
<span class="t" style="left:18.80px;top:174.29px;font-size:8.4px;line-height:10.08px;color:#000;letter-spacing:-0.300px;width:36.3px;overflow:hidden;text-shadow:none;">NSW</span>
<span class="t" style="left:124.28px;top:174.29px;font-size:8.4px;line-height:10.08px;color:#000;letter-spacing:-0.300px;text-shadow:none;">646</span>
<span class="t" style="left:152.49px;top:174.29px;font-size:8.4px;line-height:10.08px;color:#000;letter-spacing:-0.300px;text-shadow:none;">$768,723.22</span>
<span class="t" style="left:18.80px;top:184.02px;font-size:8.4px;line-height:10.08px;color:#000;letter-spacing:-0.300px;width:36.3px;overflow:hidden;text-shadow:none;">VIC</span>
<span class="t" style="left:124.28px;top:184.02px;font-size:8.4px;line-height:10.08px;color:#000;letter-spacing:-0.300px;text-shadow:none;">289</span>
<span class="t" style="left:152.49px;top:184.02px;font-size:8.4px;line-height:10.08px;color:#000;letter-spacing:-0.300px;text-shadow:none;">$283,640.57</span>
<span class="t" style="left:18.80px;top:193.75px;font-size:8.4px;line-height:10.08px;color:#000;letter-spacing:-0.300px;width:36.3px;overflow:hidden;text-shadow:none;">WA</span>
<span class="t" style="left:124.28px;top:193.75px;font-size:8.4px;line-height:10.08px;color:#000;letter-spacing:-0.300px;text-shadow:none;">104</span>
<span class="t" style="left:156.86px;top:193.75px;font-size:8.4px;line-height:10.08px;color:#000;letter-spacing:-0.300px;text-shadow:none;">$86,443.15</span>
<span class="t" style="left:18.80px;top:222.94px;font-size:8.4px;line-height:10.08px;color:#000;letter-spacing:-0.300px;width:36.3px;overflow:hidden;text-shadow:none;">Consumer</span>
<span class="t" style="left:124.28px;top:222.94px;font-size:8.4px;line-height:10.08px;color:#000;letter-spacing:-0.300px;text-shadow:none;">177</span>
<span class="t" style="left:152.49px;top:222.94px;font-size:8.4px;line-height:10.08px;color:#000;letter-spacing:-0.300px;text-shadow:none;">$191,942.85</span>
<span class="t" style="left:18.80px;top:232.67px;font-size:8.4px;line-height:10.08px;color:#000;letter-spacing:-0.300px;width:36.3px;overflow:hidden;text-shadow:none;">Corporate</span>
<span class="t" style="left:124.28px;top:232.67px;font-size:8.4px;line-height:10.08px;color:#000;letter-spacing:-0.300px;text-shadow:none;">377</span>
<span class="t" style="left:152.49px;top:232.67px;font-size:8.4px;line-height:10.08px;color:#000;letter-spacing:-0.300px;text-shadow:none;">$389,261.09</span>
<span class="t" style="left:18.80px;top:242.40px;font-size:8.4px;line-height:10.08px;color:#000;letter-spacing:-0.300px;width:36.3px;overflow:hidden;text-shadow:none;">Home Office</span>
<span class="t" style="left:124.28px;top:242.40px;font-size:8.4px;line-height:10.08px;color:#000;letter-spacing:-0.300px;text-shadow:none;">264</span>
<span class="t" style="left:152.49px;top:242.40px;font-size:8.4px;line-height:10.08px;color:#000;letter-spacing:-0.300px;text-shadow:none;">$272,528.74</span>
<span class="t" style="left:18.80px;top:252.13px;font-size:8.4px;line-height:10.08px;color:#000;letter-spacing:-0.300px;width:36.3px;overflow:hidden;text-shadow:none;">Small Business</span>
<span class="t" style="left:124.28px;top:252.13px;font-size:8.4px;line-height:10.08px;color:#000;letter-spacing:-0.300px;text-shadow:none;">221</span>
<span class="t" style="left:152.49px;top:252.13px;font-size:8.4px;line-height:10.08px;color:#000;letter-spacing:-0.300px;text-shadow:none;">$285,074.25</span>
<div class="r" style="left:17.00px;top:300.82px;width:376.40px;height:19.46px;background:#dce4f3;border-bottom:1px solid #8eaadb;box-sizing:border-box;"></div>
<div class="r" style="left:17.00px;top:456.50px;width:376.40px;height:9.73px;background:#dce4f3;border-top:1px solid #8eaadb;box-sizing:border-box;"></div>
<span class="t" style="left:18.80px;top:300.73px;font-size:8.5px;line-height:10.20px;color:#000;letter-spacing:-0.100px;font-weight:bold;width:34.5px;overflow:hidden;text-shadow:none;">Account Manager</span>
<span class="t" style="left:57.50px;top:300.73px;font-size:8.5px;line-height:10.20px;color:#000;letter-spacing:0.006px;font-weight:bold;text-shadow:none;">Column Labels</span>
<div class="r" style="left:130.30px;top:301.62px;width:8.20px;height:8.00px;background:#f6f6f6;border:0.7px solid #a9a9a9;box-sizing:border-box;border-radius:1px;"></div><svg class="r" style="left:132.0px;top:303.62px" width="5" height="5" viewBox="0 0 5 5"><path d="M0.300 0.300h4.400l-1.700 2v2.400h-1v-2.400z" fill="#444"/></svg>
<span class="t" style="left:18.80px;top:310.46px;font-size:8.5px;line-height:10.20px;color:#000;letter-spacing:-0.100px;font-weight:bold;width:36.3px;overflow:hidden;text-shadow:none;">Row Labels</span>
<div class="r" style="left:44.00px;top:311.05px;width:11.00px;height:8.23px;background:#dce4f3;"></div>
<div class="r" style="left:46.30px;top:311.35px;width:8.20px;height:8.00px;background:#f6f6f6;border:0.7px solid #a9a9a9;box-sizing:border-box;border-radius:1px;"></div><svg class="r" style="left:48.5px;top:314.55px" width="4" height="3" viewBox="0 0 4 3"><path d="M0 0.300h4l-2 2.400z" fill="#444"/></svg>
<span class="t" style="left:57.50px;top:310.46px;font-size:8.5px;line-height:10.20px;color:#000;letter-spacing:0.197px;font-weight:bold;text-shadow:none;">2013</span>
<span class="t" style="left:142.00px;top:310.46px;font-size:8.5px;line-height:10.20px;color:#000;letter-spacing:0.030px;font-weight:bold;text-shadow:none;">2014</span>
<span class="t" style="left:200.00px;top:310.46px;font-size:8.5px;line-height:10.20px;color:#000;letter-spacing:0.197px;font-weight:bold;text-shadow:none;">2015</span>
<span class="t" style="left:266.00px;top:310.46px;font-size:8.5px;line-height:10.20px;color:#000;letter-spacing:0.197px;font-weight:bold;text-shadow:none;">2016</span>
<span class="t" style="left:331.00px;top:310.46px;font-size:8.5px;line-height:10.20px;color:#000;letter-spacing:0.193px;font-weight:bold;text-shadow:none;">Grand Total</span>
<span class="t" style="left:18.80px;top:320.24px;font-size:8.4px;line-height:10.08px;color:#000;letter-spacing:-0.300px;width:36.3px;overflow:hidden;text-shadow:none;">Aanya Zhang</span>
<span class="t" style="left:96.02px;top:320.24px;font-size:8.4px;line-height:10.08px;color:#000;letter-spacing:-0.300px;text-shadow:none;">20296.3418</span>
<span class="t" style="left:158.89px;top:320.24px;font-size:8.4px;line-height:10.08px;color:#000;letter-spacing:-0.300px;text-shadow:none;">4190.5551</span>
<span class="t" style="left:224.89px;top:320.24px;font-size:8.4px;line-height:10.08px;color:#000;letter-spacing:-0.300px;text-shadow:none;">2993.3496</span>
<span class="t" style="left:285.52px;top:320.24px;font-size:8.4px;line-height:10.08px;color:#000;letter-spacing:-0.300px;text-shadow:none;">41701.2187</span>
<span class="t" style="left:349.92px;top:320.24px;font-size:8.4px;line-height:10.08px;color:#000;letter-spacing:-0.300px;text-shadow:none;">69181.4652</span>
<span class="t" style="left:18.80px;top:329.97px;font-size:8.4px;line-height:10.08px;color:#000;letter-spacing:-0.300px;width:36.3px;overflow:hidden;text-shadow:none;">Charlie Bui</span>
<span class="t" style="left:100.39px;top:329.97px;font-size:8.4px;line-height:10.08px;color:#000;letter-spacing:-0.300px;text-shadow:none;">5187.7126</span>
<span class="t" style="left:154.52px;top:329.97px;font-size:8.4px;line-height:10.08px;color:#000;letter-spacing:-0.300px;text-shadow:none;">33803.7598</span>
<span class="t" style="left:220.52px;top:329.97px;font-size:8.4px;line-height:10.08px;color:#000;letter-spacing:-0.300px;text-shadow:none;">13366.2216</span>
<span class="t" style="left:289.89px;top:329.97px;font-size:8.4px;line-height:10.08px;color:#000;letter-spacing:-0.300px;text-shadow:none;">2722.2123</span>
<span class="t" style="left:349.92px;top:329.97px;font-size:8.4px;line-height:10.08px;color:#000;letter-spacing:-0.300px;text-shadow:none;">55079.9063</span>
<span class="t" style="left:18.80px;top:339.70px;font-size:8.4px;line-height:10.08px;color:#000;letter-spacing:-0.300px;width:36.3px;overflow:hidden;text-shadow:none;">Connor Betts</span>
<span class="t" style="left:100.39px;top:339.70px;font-size:8.4px;line-height:10.08px;color:#000;letter-spacing:-0.300px;text-shadow:none;">8706.8625</span>
<span class="t" style="left:154.52px;top:339.70px;font-size:8.4px;line-height:10.08px;color:#000;letter-spacing:-0.300px;text-shadow:none;">27899.6073</span>
<span class="t" style="left:220.52px;top:339.70px;font-size:8.4px;line-height:10.08px;color:#000;letter-spacing:-0.300px;text-shadow:none;">41877.7915</span>
<span class="t" style="left:285.52px;top:339.70px;font-size:8.4px;line-height:10.08px;color:#000;letter-spacing:-0.300px;text-shadow:none;">47802.9126</span>
<span class="t" style="left:345.55px;top:339.70px;font-size:8.4px;line-height:10.08px;color:#000;letter-spacing:-0.300px;text-shadow:none;">126287.1739</span>
<span class="t" style="left:18.80px;top:349.43px;font-size:8.4px;line-height:10.08px;color:#000;letter-spacing:-0.300px;width:36.3px;overflow:hidden;text-shadow:none;">Leighton Forrest</span>
<span class="t" style="left:100.39px;top:349.43px;font-size:8.4px;line-height:10.08px;color:#000;letter-spacing:-0.300px;text-shadow:none;">6351.3148</span>
<span class="t" style="left:154.52px;top:349.43px;font-size:8.4px;line-height:10.08px;color:#000;letter-spacing:-0.300px;text-shadow:none;">14097.0263</span>
<span class="t" style="left:220.52px;top:349.43px;font-size:8.4px;line-height:10.08px;color:#000;letter-spacing:-0.300px;text-shadow:none;">31907.8809</span>
<span class="t" style="left:289.89px;top:349.43px;font-size:8.4px;line-height:10.08px;color:#000;letter-spacing:-0.300px;text-shadow:none;">26818.288</span>
<span class="t" style="left:358.66px;top:349.43px;font-size:8.4px;line-height:10.08px;color:#000;letter-spacing:-0.300px;text-shadow:none;">79174.51</span>
<span class="t" style="left:18.80px;top:359.16px;font-size:8.4px;line-height:10.08px;color:#000;letter-spacing:-0.300px;width:36.3px;overflow:hidden;text-shadow:none;">Mihael Khan</span>
<span class="t" style="left:100.39px;top:359.16px;font-size:8.4px;line-height:10.08px;color:#000;letter-spacing:-0.300px;text-shadow:none;">5150.1589</span>
<span class="t" style="left:163.26px;top:359.16px;font-size:8.4px;line-height:10.08px;color:#000;letter-spacing:-0.300px;text-shadow:none;">6707.861</span>
<span class="t" style="left:220.52px;top:359.16px;font-size:8.4px;line-height:10.08px;color:#000;letter-spacing:-0.300px;text-shadow:none;">68219.1588</span>
<span class="t" style="left:289.89px;top:359.16px;font-size:8.4px;line-height:10.08px;color:#000;letter-spacing:-0.300px;text-shadow:none;">2807.2837</span>
<span class="t" style="left:349.92px;top:359.16px;font-size:8.4px;line-height:10.08px;color:#000;letter-spacing:-0.300px;text-shadow:none;">82884.4624</span>
<span class="t" style="left:18.80px;top:368.89px;font-size:8.4px;line-height:10.08px;color:#000;letter-spacing:-0.300px;width:36.3px;overflow:hidden;text-shadow:none;">Natasha Song</span>
<span class="t" style="left:96.02px;top:368.89px;font-size:8.4px;line-height:10.08px;color:#000;letter-spacing:-0.300px;text-shadow:none;">16049.8063</span>
<span class="t" style="left:155.14px;top:368.89px;font-size:8.4px;line-height:10.08px;color:#000;letter-spacing:-0.300px;text-shadow:none;">61179.2273</span>
<span class="t" style="left:220.52px;top:368.89px;font-size:8.4px;line-height:10.08px;color:#000;letter-spacing:-0.300px;text-shadow:none;">21588.6161</span>
<span class="t" style="left:285.52px;top:368.89px;font-size:8.4px;line-height:10.08px;color:#000;letter-spacing:-0.300px;text-shadow:none;">20619.8635</span>
<span class="t" style="left:346.17px;top:368.89px;font-size:8.4px;line-height:10.08px;color:#000;letter-spacing:-0.300px;text-shadow:none;">119437.5132</span>
<span class="t" style="left:18.80px;top:378.62px;font-size:8.4px;line-height:10.08px;color:#000;letter-spacing:-0.300px;width:36.3px;overflow:hidden;text-shadow:none;">Nicholas Fernandes</span>
<span class="t" style="left:100.39px;top:378.62px;font-size:8.4px;line-height:10.08px;color:#000;letter-spacing:-0.300px;text-shadow:none;">7613.9438</span>
<span class="t" style="left:163.26px;top:378.62px;font-size:8.4px;line-height:10.08px;color:#000;letter-spacing:-0.300px;text-shadow:none;">6856.232</span>
<span class="t" style="left:220.52px;top:378.62px;font-size:8.4px;line-height:10.08px;color:#000;letter-spacing:-0.300px;text-shadow:none;">20874.7706</span>
<span class="t" style="left:285.52px;top:378.62px;font-size:8.4px;line-height:10.08px;color:#000;letter-spacing:-0.300px;text-shadow:none;">27226.5371</span>
<span class="t" style="left:349.92px;top:378.62px;font-size:8.4px;line-height:10.08px;color:#000;letter-spacing:-0.300px;text-shadow:none;">62571.4835</span>
<span class="t" style="left:18.80px;top:388.35px;font-size:8.4px;line-height:10.08px;color:#000;letter-spacing:-0.300px;width:36.3px;overflow:hidden;text-shadow:none;">Phoebe Gour</span>
<span class="t" style="left:96.02px;top:388.35px;font-size:8.4px;line-height:10.08px;color:#000;letter-spacing:-0.300px;text-shadow:none;">15062.0996</span>
<span class="t" style="left:154.52px;top:388.35px;font-size:8.4px;line-height:10.08px;color:#000;letter-spacing:-0.300px;text-shadow:none;">10097.4482</span>
<span class="t" style="left:220.52px;top:388.35px;font-size:8.4px;line-height:10.08px;color:#000;letter-spacing:-0.300px;text-shadow:none;">22104.2487</span>
<span class="t" style="left:285.52px;top:388.35px;font-size:8.4px;line-height:10.08px;color:#000;letter-spacing:-0.300px;text-shadow:none;">31496.7669</span>
<span class="t" style="left:349.92px;top:388.35px;font-size:8.4px;line-height:10.08px;color:#000;letter-spacing:-0.300px;text-shadow:none;">78760.5634</span>
<span class="t" style="left:18.80px;top:398.08px;font-size:8.4px;line-height:10.08px;color:#000;letter-spacing:-0.300px;width:36.3px;overflow:hidden;text-shadow:none;">Preston Senome</span>
<span class="t" style="left:104.76px;top:398.08px;font-size:8.4px;line-height:10.08px;color:#000;letter-spacing:-0.300px;text-shadow:none;">538.9422</span>
<span class="t" style="left:158.89px;top:398.08px;font-size:8.4px;line-height:10.08px;color:#000;letter-spacing:-0.300px;text-shadow:none;">3959.5741</span>
<span class="t" style="left:224.89px;top:398.08px;font-size:8.4px;line-height:10.08px;color:#000;letter-spacing:-0.300px;text-shadow:none;">6498.4348</span>
<span class="t" style="left:289.89px;top:398.08px;font-size:8.4px;line-height:10.08px;color:#000;letter-spacing:-0.300px;text-shadow:none;">7353.0957</span>
<span class="t" style="left:349.92px;top:398.08px;font-size:8.4px;line-height:10.08px;color:#000;letter-spacing:-0.300px;text-shadow:none;">18350.0468</span>
<span class="t" style="left:18.80px;top:407.81px;font-size:8.4px;line-height:10.08px;color:#000;letter-spacing:-0.300px;width:36.3px;overflow:hidden;text-shadow:none;">Radhya Staples</span>
<span class="t" style="left:100.39px;top:407.81px;font-size:8.4px;line-height:10.08px;color:#000;letter-spacing:-0.300px;text-shadow:none;">3991.8022</span>
<span class="t" style="left:154.52px;top:407.81px;font-size:8.4px;line-height:10.08px;color:#000;letter-spacing:-0.300px;text-shadow:none;">36284.8628</span>
<span class="t" style="left:220.52px;top:407.81px;font-size:8.4px;line-height:10.08px;color:#000;letter-spacing:-0.300px;text-shadow:none;">21313.6908</span>
<span class="t" style="left:285.52px;top:407.81px;font-size:8.4px;line-height:10.08px;color:#000;letter-spacing:-0.300px;text-shadow:none;">10599.0272</span>
<span class="t" style="left:354.29px;top:407.81px;font-size:8.4px;line-height:10.08px;color:#000;letter-spacing:-0.300px;text-shadow:none;">72189.383</span>
<span class="t" style="left:18.80px;top:417.54px;font-size:8.4px;line-height:10.08px;color:#000;letter-spacing:-0.300px;width:36.3px;overflow:hidden;text-shadow:none;">Samantha Chairs</span>
<span class="t" style="left:96.64px;top:417.54px;font-size:8.4px;line-height:10.08px;color:#000;letter-spacing:-0.300px;text-shadow:none;">14278.1136</span>
<span class="t" style="left:154.52px;top:417.54px;font-size:8.4px;line-height:10.08px;color:#000;letter-spacing:-0.300px;text-shadow:none;">15766.0732</span>
<span class="t" style="left:220.52px;top:417.54px;font-size:8.4px;line-height:10.08px;color:#000;letter-spacing:-0.300px;text-shadow:none;">38901.4199</span>
<span class="t" style="left:285.52px;top:417.54px;font-size:8.4px;line-height:10.08px;color:#000;letter-spacing:-0.300px;text-shadow:none;">10683.4869</span>
<span class="t" style="left:349.92px;top:417.54px;font-size:8.4px;line-height:10.08px;color:#000;letter-spacing:-0.300px;text-shadow:none;">79629.0936</span>
<span class="t" style="left:18.80px;top:427.27px;font-size:8.4px;line-height:10.08px;color:#000;letter-spacing:-0.300px;width:36.3px;overflow:hidden;text-shadow:none;">Stevie Bacata</span>
<span class="t" style="left:100.39px;top:427.27px;font-size:8.4px;line-height:10.08px;color:#000;letter-spacing:-0.300px;text-shadow:none;">5695.6567</span>
<span class="t" style="left:163.26px;top:427.27px;font-size:8.4px;line-height:10.08px;color:#000;letter-spacing:-0.300px;text-shadow:none;">130.7424</span>
<span class="t" style="left:233.64px;top:427.27px;font-size:8.4px;line-height:10.08px;color:#000;letter-spacing:-0.300px;text-shadow:none;">455.701</span>
<span class="t" style="left:294.26px;top:427.27px;font-size:8.4px;line-height:10.08px;color:#000;letter-spacing:-0.300px;text-shadow:none;">446.0596</span>
<span class="t" style="left:354.29px;top:427.27px;font-size:8.4px;line-height:10.08px;color:#000;letter-spacing:-0.300px;text-shadow:none;">6728.1597</span>
<span class="t" style="left:18.80px;top:437.00px;font-size:8.4px;line-height:10.08px;color:#000;letter-spacing:-0.300px;width:36.3px;overflow:hidden;text-shadow:none;">Tina Carlton</span>
<span class="t" style="left:91.65px;top:437.00px;font-size:8.4px;line-height:10.08px;color:#000;letter-spacing:-0.300px;text-shadow:none;">21750.56126</span>
<span class="t" style="left:154.52px;top:437.00px;font-size:8.4px;line-height:10.08px;color:#000;letter-spacing:-0.300px;text-shadow:none;">42012.1284</span>
<span class="t" style="left:220.52px;top:437.00px;font-size:8.4px;line-height:10.08px;color:#000;letter-spacing:-0.300px;text-shadow:none;">27109.9982</span>
<span class="t" style="left:285.52px;top:437.00px;font-size:8.4px;line-height:10.08px;color:#000;letter-spacing:-0.300px;text-shadow:none;">27979.7206</span>
<span class="t" style="left:346.17px;top:437.00px;font-size:8.4px;line-height:10.08px;color:#000;letter-spacing:-0.300px;text-shadow:none;">118852.4085</span>
<span class="t" style="left:18.80px;top:446.73px;font-size:8.4px;line-height:10.08px;color:#000;letter-spacing:-0.300px;width:36.3px;overflow:hidden;text-shadow:none;">Yvette Biti</span>
<span class="t" style="left:96.02px;top:446.73px;font-size:8.4px;line-height:10.08px;color:#000;letter-spacing:-0.300px;text-shadow:none;">41077.4826</span>
<span class="t" style="left:154.52px;top:446.73px;font-size:8.4px;line-height:10.08px;color:#000;letter-spacing:-0.300px;text-shadow:none;">56246.5616</span>
<span class="t" style="left:220.52px;top:446.73px;font-size:8.4px;line-height:10.08px;color:#000;letter-spacing:-0.300px;text-shadow:none;">35551.6637</span>
<span class="t" style="left:285.52px;top:446.73px;font-size:8.4px;line-height:10.08px;color:#000;letter-spacing:-0.300px;text-shadow:none;">14032.2234</span>
<span class="t" style="left:345.55px;top:446.73px;font-size:8.4px;line-height:10.08px;color:#000;letter-spacing:-0.300px;text-shadow:none;">146907.9313</span>
<span class="t" style="left:18.80px;top:456.41px;font-size:8.5px;line-height:10.20px;color:#000;letter-spacing:-0.100px;font-weight:bold;width:36.3px;overflow:hidden;text-shadow:none;">Grand Total</span>
<span class="t" style="left:85.20px;top:456.36px;font-size:8.6px;line-height:10.32px;color:#000;letter-spacing:0.208px;font-weight:bold;text-shadow:none;">171750.7989</span>
<span class="t" style="left:154.70px;top:456.36px;font-size:8.6px;line-height:10.32px;color:#000;font-weight:bold;transform:scaleX(0.9987);transform-origin:0 50%;text-shadow:none;">319231.66</span>
<span class="t" style="left:205.00px;top:456.36px;font-size:8.6px;line-height:10.32px;color:#000;letter-spacing:0.578px;font-weight:bold;text-shadow:none;">352762.9462</span>
<span class="t" style="left:269.50px;top:456.36px;font-size:8.6px;line-height:10.32px;color:#000;letter-spacing:0.568px;font-weight:bold;text-shadow:none;">272288.6962</span>
<span class="t" style="left:343.80px;top:456.36px;font-size:8.6px;line-height:10.32px;color:#000;font-weight:bold;transform:scaleX(0.9742);transform-origin:0 50%;text-shadow:none;">1116034.101</span>
<div class="r" style="left:705.50px;top:397.62px;width:39.50px;height:11.03px;background:transparent;border:1.500px solid #21785b;box-sizing:border-box;"></div>
<div class="r" style="left:742.60px;top:406.25px;width:3.80px;height:3.80px;background:#ffffff;"></div>
<div class="r" style="left:743.40px;top:407.05px;width:3.00px;height:3.00px;background:#21785b;"></div>
</div>
<!-- gen_charts -->
<div class="sh">
<div class="r" style="left:198.50px;top:164.60px;width:312.00px;height:96.40px;background:#ffffff;border:1px solid #d9d9d9;border-top:none;box-sizing:border-box;"></div>
<span class="t" style="left:318.50px;top:170.42px;font-size:9.2px;line-height:11.04px;color:#595959;transform:scaleX(0.9645);transform-origin:0 50%;">Count of Order No</span>
<svg class="r" style="left:0;top:0" width="1024" height="523" viewBox="0 0 1024 523"><path d="M354.70 213.30L354.70 193.80A19.5 19.5 0 1 1 341.20 227.37Z" fill="#3f6fb8" stroke="#fff" stroke-width="0.9" stroke-linejoin="round"/><path d="M354.70 213.30L341.20 227.37A19.5 19.5 0 0 1 343.23 197.53Z" fill="#e67b31" stroke="#fff" stroke-width="0.9" stroke-linejoin="round"/><path d="M354.70 213.30L343.23 197.53A19.5 19.5 0 0 1 354.70 193.80Z" fill="#a6a6a6" stroke="#fff" stroke-width="0.9" stroke-linejoin="round"/></svg>
<span class="t" style="left:336.00px;top:186.53px;font-size:5.6px;line-height:6.72px;color:#595959;letter-spacing:0.646px;">10%</span>
<span class="t" style="left:338.50px;top:210.83px;font-size:5.6px;line-height:6.72px;color:#404040;letter-spacing:0.146px;">28%</span>
<span class="t" style="left:357.00px;top:215.03px;font-size:5.6px;line-height:6.72px;color:#404040;letter-spacing:0.396px;">62%</span>
<div class="r" style="left:329.50px;top:249.30px;width:2.20px;height:2.20px;background:#3f6fb8;"></div>
<span class="t" style="left:333.00px;top:247.69px;font-size:5.3px;line-height:6.36px;color:#595959;transform:scaleX(0.8492);transform-origin:0 50%;">NSW</span>
<div class="r" style="left:350.50px;top:249.30px;width:2.20px;height:2.20px;background:#e67b31;"></div>
<span class="t" style="left:354.00px;top:247.69px;font-size:5.3px;line-height:6.36px;color:#595959;transform:scaleX(0.9621);transform-origin:0 50%;">VIC</span>
<div class="r" style="left:369.00px;top:249.30px;width:2.20px;height:2.20px;background:#a6a6a6;"></div>
<span class="t" style="left:372.50px;top:247.69px;font-size:5.3px;line-height:6.36px;color:#595959;letter-spacing:0.159px;">WA</span>
<div class="r" style="left:510.50px;top:164.60px;width:209.00px;height:96.40px;background:#ffffff;border:1px solid #d9d9d9;border-top:none;border-left:none;box-sizing:border-box;"></div>
<span class="t" style="left:578.00px;top:170.42px;font-size:9.2px;line-height:11.04px;color:#595959;transform:scaleX(0.9712);transform-origin:0 50%;">Count of Order No</span>
<svg class="r" style="left:0;top:0" width="1024" height="523" viewBox="0 0 1024 523"><path d="M588.40 221.00L588.40 195.00A26 26 0 0 1 611.21 208.53Z" fill="#3f6fb8" stroke="#fff" stroke-width="0.9" stroke-linejoin="round"/><path d="M588.40 221.00L611.21 208.53A26 26 0 0 1 583.01 246.44Z" fill="#e67b31" stroke="#fff" stroke-width="0.9" stroke-linejoin="round"/><path d="M588.40 221.00L583.01 246.44A26 26 0 0 1 563.11 214.96Z" fill="#a6a6a6" stroke="#fff" stroke-width="0.9" stroke-linejoin="round"/><path d="M588.40 221.00L563.11 214.96A26 26 0 0 1 588.40 195.00Z" fill="#efbe45" stroke="#fff" stroke-width="0.9" stroke-linejoin="round"/></svg>
<span class="t" style="left:591.50px;top:204.83px;font-size:5.6px;line-height:6.72px;color:#404040;letter-spacing:0.146px;">17%</span>
<span class="t" style="left:595.50px;top:227.73px;font-size:5.6px;line-height:6.72px;color:#404040;letter-spacing:0.146px;">36%</span>
<span class="t" style="left:567.00px;top:226.53px;font-size:5.6px;line-height:6.72px;color:#404040;letter-spacing:0.396px;">26%</span>
<span class="t" style="left:570.50px;top:205.53px;font-size:5.6px;line-height:6.72px;color:#c0392b;letter-spacing:0.396px;">21%</span>
<div class="r" style="left:670.30px;top:202.00px;width:2.00px;height:2.00px;background:#3f6fb8;"></div>
<span class="t" style="left:674.50px;top:199.94px;font-size:5.4px;line-height:6.48px;color:#595959;letter-spacing:0.227px;">Consumer</span>
<div class="r" style="left:670.30px;top:214.00px;width:2.00px;height:2.00px;background:#e67b31;"></div>
<span class="t" style="left:674.50px;top:211.94px;font-size:5.4px;line-height:6.48px;color:#595959;letter-spacing:0.248px;">Corporate</span>
<div class="r" style="left:670.30px;top:226.10px;width:2.00px;height:2.00px;background:#a6a6a6;"></div>
<span class="t" style="left:674.50px;top:224.04px;font-size:5.4px;line-height:6.48px;color:#595959;letter-spacing:0.209px;">Home Office</span>
<div class="r" style="left:670.30px;top:237.40px;width:2.00px;height:2.00px;background:#efbe45;"></div>
<span class="t" style="left:674.50px;top:235.34px;font-size:5.4px;line-height:6.48px;color:#595959;transform:scaleX(0.9888);transform-origin:0 50%;">Small Business</span>
<div class="r" style="left:393.80px;top:302.00px;width:250.70px;height:154.30px;background:#ffffff;border:1px solid #d9d9d9;box-sizing:border-box;"></div>
<div class="r" style="left:421.30px;top:405.90px;width:185.70px;height:0.80px;background:#dfdfdf;"></div>
<span class="t" style="left:412.55px;top:403.69px;font-size:5.3px;line-height:6.36px;color:#595959;">0</span>
<div class="r" style="left:421.30px;top:393.81px;width:185.70px;height:0.80px;background:#dfdfdf;"></div>
<span class="t" style="left:400.76px;top:391.60px;font-size:5.3px;line-height:6.36px;color:#595959;">10000</span>
<div class="r" style="left:421.30px;top:381.72px;width:185.70px;height:0.80px;background:#dfdfdf;"></div>
<span class="t" style="left:400.76px;top:379.51px;font-size:5.3px;line-height:6.36px;color:#595959;">20000</span>
<div class="r" style="left:421.30px;top:369.63px;width:185.70px;height:0.80px;background:#dfdfdf;"></div>
<span class="t" style="left:400.76px;top:367.42px;font-size:5.3px;line-height:6.36px;color:#595959;">30000</span>
<div class="r" style="left:421.30px;top:357.54px;width:185.70px;height:0.80px;background:#dfdfdf;"></div>
<span class="t" style="left:400.76px;top:355.33px;font-size:5.3px;line-height:6.36px;color:#595959;">40000</span>
<div class="r" style="left:421.30px;top:345.45px;width:185.70px;height:0.80px;background:#dfdfdf;"></div>
<span class="t" style="left:400.76px;top:343.24px;font-size:5.3px;line-height:6.36px;color:#595959;">50000</span>
<div class="r" style="left:421.30px;top:333.36px;width:185.70px;height:0.80px;background:#dfdfdf;"></div>
<span class="t" style="left:400.76px;top:331.15px;font-size:5.3px;line-height:6.36px;color:#595959;">60000</span>
<div class="r" style="left:421.30px;top:321.27px;width:185.70px;height:0.80px;background:#dfdfdf;"></div>
<span class="t" style="left:400.76px;top:319.06px;font-size:5.3px;line-height:6.36px;color:#595959;">70000</span>
<div class="r" style="left:421.30px;top:309.18px;width:185.70px;height:0.80px;background:#dfdfdf;"></div>
<span class="t" style="left:400.76px;top:306.97px;font-size:5.3px;line-height:6.36px;color:#595959;">80000</span>
<svg class="r" style="left:0;top:0" width="1024" height="523" viewBox="0 0 1024 523"><rect x="423.51" y="381.76" width="2.21" height="24.54" fill="#3f6fb8"/><rect x="425.72" y="401.23" width="2.21" height="5.07" fill="#e67b31"/><rect x="427.93" y="402.68" width="2.21" height="3.62" fill="#a6a6a6"/><rect x="430.14" y="355.88" width="2.21" height="50.42" fill="#efbe45"/><text x="430.33" y="413.10" font-size="5.850" fill="#595959" text-anchor="end" transform="rotate(-45 430.33 413.10)" font-family="Liberation Sans, sans-serif">Aanya Zhang</text><rect x="436.77" y="400.03" width="2.21" height="6.27" fill="#3f6fb8"/><rect x="438.99" y="365.43" width="2.21" height="40.87" fill="#e67b31"/><rect x="441.20" y="390.14" width="2.21" height="16.16" fill="#a6a6a6"/><rect x="443.41" y="403.01" width="2.21" height="3.29" fill="#efbe45"/><text x="443.60" y="413.10" font-size="5.850" fill="#595959" text-anchor="end" transform="rotate(-45 443.60 413.10)" font-family="Liberation Sans, sans-serif">Charlie Bui</text><rect x="450.04" y="395.77" width="2.21" height="10.53" fill="#3f6fb8"/><rect x="452.25" y="372.57" width="2.21" height="33.73" fill="#e67b31"/><rect x="454.46" y="355.67" width="2.21" height="50.63" fill="#a6a6a6"/><rect x="456.67" y="348.51" width="2.21" height="57.79" fill="#efbe45"/><text x="456.86" y="413.10" font-size="5.850" fill="#595959" text-anchor="end" transform="rotate(-45 456.86 413.10)" font-family="Liberation Sans, sans-serif">Connor Betts</text><rect x="463.30" y="398.62" width="2.21" height="7.68" fill="#3f6fb8"/><rect x="465.51" y="389.26" width="2.21" height="17.04" fill="#e67b31"/><rect x="467.73" y="367.72" width="2.21" height="38.58" fill="#a6a6a6"/><rect x="469.94" y="373.88" width="2.21" height="32.42" fill="#efbe45"/><text x="470.12" y="413.10" font-size="5.850" fill="#595959" text-anchor="end" transform="rotate(-45 470.12 413.10)" font-family="Liberation Sans, sans-serif">Leighton Forrest</text><rect x="476.57" y="400.07" width="2.21" height="6.23" fill="#3f6fb8"/><rect x="478.78" y="398.19" width="2.21" height="8.11" fill="#e67b31"/><rect x="480.99" y="323.82" width="2.21" height="82.48" fill="#a6a6a6"/><rect x="483.20" y="402.91" width="2.21" height="3.39" fill="#efbe45"/><text x="483.39" y="413.10" font-size="5.850" fill="#595959" text-anchor="end" transform="rotate(-45 483.39 413.10)" font-family="Liberation Sans, sans-serif">Mihael Khan</text><rect x="489.83" y="386.90" width="2.21" height="19.40" fill="#3f6fb8"/><rect x="492.04" y="332.33" width="2.21" height="73.97" fill="#e67b31"/><rect x="494.25" y="380.20" width="2.21" height="26.10" fill="#a6a6a6"/><rect x="496.46" y="381.37" width="2.21" height="24.93" fill="#efbe45"/><text x="496.65" y="413.10" font-size="5.850" fill="#595959" text-anchor="end" transform="rotate(-45 496.65 413.10)" font-family="Liberation Sans, sans-serif">Natasha Song</text><rect x="503.10" y="397.10" width="2.21" height="9.20" fill="#3f6fb8"/><rect x="505.31" y="398.01" width="2.21" height="8.29" fill="#e67b31"/><rect x="507.52" y="381.06" width="2.21" height="25.24" fill="#a6a6a6"/><rect x="509.73" y="373.38" width="2.21" height="32.92" fill="#efbe45"/><text x="509.92" y="413.10" font-size="5.850" fill="#595959" text-anchor="end" transform="rotate(-45 509.92 413.10)" font-family="Liberation Sans, sans-serif">Nicholas Fernandes</text><rect x="516.36" y="388.09" width="2.21" height="18.21" fill="#3f6fb8"/><rect x="518.57" y="394.09" width="2.21" height="12.21" fill="#e67b31"/><rect x="520.78" y="379.58" width="2.21" height="26.72" fill="#a6a6a6"/><rect x="522.99" y="368.22" width="2.21" height="38.08" fill="#efbe45"/><text x="523.18" y="413.10" font-size="5.850" fill="#595959" text-anchor="end" transform="rotate(-45 523.18 413.10)" font-family="Liberation Sans, sans-serif">Phoebe Gour</text><rect x="529.62" y="405.65" width="2.21" height="0.65" fill="#3f6fb8"/><rect x="531.84" y="401.51" width="2.21" height="4.79" fill="#e67b31"/><rect x="534.05" y="398.44" width="2.21" height="7.86" fill="#a6a6a6"/><rect x="536.26" y="397.41" width="2.21" height="8.89" fill="#efbe45"/><text x="536.45" y="413.10" font-size="5.850" fill="#595959" text-anchor="end" transform="rotate(-45 536.45 413.10)" font-family="Liberation Sans, sans-serif">Preston Senome</text><rect x="542.89" y="401.47" width="2.21" height="4.83" fill="#3f6fb8"/><rect x="545.10" y="362.43" width="2.21" height="43.87" fill="#e67b31"/><rect x="547.31" y="380.53" width="2.21" height="25.77" fill="#a6a6a6"/><rect x="549.52" y="393.49" width="2.21" height="12.81" fill="#efbe45"/><text x="549.71" y="413.10" font-size="5.850" fill="#595959" text-anchor="end" transform="rotate(-45 549.71 413.10)" font-family="Liberation Sans, sans-serif">Radhya Staples</text><rect x="556.15" y="389.04" width="2.21" height="17.26" fill="#3f6fb8"/><rect x="558.36" y="387.24" width="2.21" height="19.06" fill="#e67b31"/><rect x="560.58" y="359.27" width="2.21" height="47.03" fill="#a6a6a6"/><rect x="562.79" y="393.38" width="2.21" height="12.92" fill="#efbe45"/><text x="562.98" y="413.10" font-size="5.850" fill="#595959" text-anchor="end" transform="rotate(-45 562.98 413.10)" font-family="Liberation Sans, sans-serif">Samantha Chairs</text><rect x="569.42" y="399.41" width="2.21" height="6.89" fill="#3f6fb8"/><rect x="571.63" y="405.70" width="2.21" height="0.60" fill="#e67b31"/><rect x="573.84" y="405.70" width="2.21" height="0.60" fill="#a6a6a6"/><rect x="576.05" y="405.70" width="2.21" height="0.60" fill="#efbe45"/><text x="576.24" y="413.10" font-size="5.850" fill="#595959" text-anchor="end" transform="rotate(-45 576.24 413.10)" font-family="Liberation Sans, sans-serif">Stevie Bacata</text><rect x="582.68" y="380.00" width="2.21" height="26.30" fill="#3f6fb8"/><rect x="584.89" y="355.51" width="2.21" height="50.79" fill="#e67b31"/><rect x="587.10" y="373.53" width="2.21" height="32.77" fill="#a6a6a6"/><rect x="589.31" y="372.47" width="2.21" height="33.83" fill="#efbe45"/><text x="589.50" y="413.10" font-size="5.850" fill="#595959" text-anchor="end" transform="rotate(-45 589.50 413.10)" font-family="Liberation Sans, sans-serif">Tina Carlton</text><rect x="595.95" y="356.64" width="2.21" height="49.66" fill="#3f6fb8"/><rect x="598.16" y="338.30" width="2.21" height="68.00" fill="#e67b31"/><rect x="600.37" y="363.32" width="2.21" height="42.98" fill="#a6a6a6"/><rect x="602.58" y="389.34" width="2.21" height="16.96" fill="#efbe45"/><text x="602.77" y="413.10" font-size="5.850" fill="#595959" text-anchor="end" transform="rotate(-45 602.77 413.10)" font-family="Liberation Sans, sans-serif">Yvette Biti</text></svg>
<div class="r" style="left:618.80px;top:359.30px;width:2.40px;height:2.40px;background:#3f6fb8;"></div>
<span class="t" style="left:623.50px;top:357.26px;font-size:6.3px;line-height:7.56px;color:#595959;transform:scaleX(0.9989);transform-origin:0 50%;">2013</span>
<div class="r" style="left:618.80px;top:371.30px;width:2.40px;height:2.40px;background:#e67b31;"></div>
<span class="t" style="left:623.50px;top:369.26px;font-size:6.3px;line-height:7.56px;color:#595959;transform:scaleX(0.9989);transform-origin:0 50%;">2014</span>
<div class="r" style="left:618.80px;top:383.30px;width:2.40px;height:2.40px;background:#a6a6a6;"></div>
<span class="t" style="left:623.50px;top:381.26px;font-size:6.3px;line-height:7.56px;color:#595959;transform:scaleX(0.9989);transform-origin:0 50%;">2015</span>
<div class="r" style="left:618.80px;top:395.30px;width:2.40px;height:2.40px;background:#efbe45;"></div>
<span class="t" style="left:623.50px;top:393.26px;font-size:6.3px;line-height:7.56px;color:#595959;transform:scaleX(0.9989);transform-origin:0 50%;">2016</span>
</div>
<!-- gen_slicers -->
<div class="sh">
<div class="r" style="left:729.20px;top:171.20px;width:185.40px;height:76.40px;background:#ffffff;border:1px solid #8eaadb;box-sizing:border-box;"></div>
<span class="t" style="left:734.00px;top:174.38px;font-size:7.2px;line-height:8.64px;color:#111;font-weight:bold;transform:scaleX(0.9271);transform-origin:0 50%;">Order Date</span>
<svg class="r" style="left:901.500px;top:173.500px" width="9" height="9" viewBox="0 0 12 11"><path d="M0.500 0.800h8l-3 3.500v4.200l-2-1.200v-3z" fill="none" stroke="#a0a0a0" stroke-width="0.900"/><path d="M7 6l4 4M11 6l-4 4" stroke="#b0b0b0" stroke-width="1" fill="none"/></svg>
<div class="r" style="left:733.00px;top:185.50px;width:177.50px;height:1.00px;background:#8eaadb;"></div>
<span class="t" style="left:734.00px;top:190.16px;font-size:6.3px;line-height:7.56px;color:#4472c4;transform:scaleX(0.9796);transform-origin:0 50%;">All Periods</span>
<span class="t" style="left:883.70px;top:191.16px;font-size:4.8px;line-height:5.76px;color:#8a8a8a;transform:scaleX(0.9709);transform-origin:0 50%;">YEARS</span>
<svg class="r" style="left:903px;top:192.500px" width="4" height="3" viewBox="0 0 4 3"><path d="M0 0.300h4l-2 2.400z" fill="#8a8a8a"/></svg>
<span class="t" style="left:734.70px;top:213.39px;font-size:5.3px;line-height:6.36px;color:#7a7a7a;letter-spacing:0.070px;">2013</span>
<span class="t" style="left:762.95px;top:213.39px;font-size:5.3px;line-height:6.36px;color:#7a7a7a;letter-spacing:0.070px;">2014</span>
<span class="t" style="left:791.20px;top:213.39px;font-size:5.3px;line-height:6.36px;color:#7a7a7a;letter-spacing:0.070px;">2015</span>
<span class="t" style="left:819.45px;top:213.39px;font-size:5.3px;line-height:6.36px;color:#7a7a7a;letter-spacing:0.070px;">2016</span>
<span class="t" style="left:847.70px;top:213.39px;font-size:5.3px;line-height:6.36px;color:#7a7a7a;letter-spacing:0.070px;">2017</span>
<div class="r" style="left:734.00px;top:222.00px;width:141.30px;height:8.80px;background:#8eaadb;background:linear-gradient(#a9bee5 0%,#86a5da 72%,#3f6cb3 76%,#3f6cb3 100%);"></div>
<div class="r" style="left:761.85px;top:222.00px;width:0.80px;height:8.80px;background:#6f92d2;"></div>
<div class="r" style="left:790.10px;top:222.00px;width:0.80px;height:8.80px;background:#6f92d2;"></div>
<div class="r" style="left:818.35px;top:222.00px;width:0.80px;height:8.80px;background:#6f92d2;"></div>
<div class="r" style="left:846.60px;top:222.00px;width:0.80px;height:8.80px;background:#6f92d2;"></div>
<div class="r" style="left:743.00px;top:236.70px;width:158.00px;height:4.00px;background:#dfe6f4;"></div>
<svg class="r" style="left:734.1px;top:234.900px" width="8.200" height="8.200" viewBox="0 0 6.800 6.800"><rect x="0.300" y="0.300" width="6.200" height="6.200" fill="#f6f6f6" stroke="#a9a9a9" stroke-width="0.600"/><path d="M3.700 1.500l-2.200 1.900 2.200 1.900z" fill="#555"/></svg>
<svg class="r" style="left:902.1px;top:234.900px" width="8.200" height="8.200" viewBox="0 0 6.800 6.800"><rect x="0.300" y="0.300" width="6.200" height="6.200" fill="#f6f6f6" stroke="#a9a9a9" stroke-width="0.600"/><path d="M2.300 1.500l2.200 1.900-2.200 1.900z" fill="#555"/></svg>
<div class="r" style="left:666.00px;top:252.90px;width:103.50px;height:89.10px;background:#ffffff;border:1px solid #8eaadb;box-sizing:border-box;"></div>
<span class="t" style="left:671.00px;top:256.60px;font-size:8.3px;line-height:9.96px;color:#111;letter-spacing:0.676px;font-weight:bold;">State</span>
<svg class="r" style="left:737.5px;top:256.5px" width="10" height="9" viewBox="0 0 10 9" fill="none" stroke="#a6a6a6" stroke-width="0.800"><path d="M3.800 1.300h5.700M3.800 4.500h5.700M3.800 7.700h5.700"/><path d="M0.400 1.200l.8.800 1.300-1.500M0.400 4.400l.8.800 1.300-1.500M0.400 7.600l.8.800 1.300-1.500" stroke-width="0.600"/></svg><svg class="r" style="left:754.5px;top:256.8px" width="9" height="9" viewBox="0 0 9 9"><path d="M0.400 0.600h5.800l-2.200 2.600v3.400l-1.400-.9v-2.500z" fill="#4a4a4a" stroke="#4a4a4a" stroke-width="0.700"/><path d="M5.200 5l3.200 3.200M8.400 5l-3.200 3.200" stroke="#4a4a4a" stroke-width="0.900" fill="none"/></svg>
<div class="r" style="left:670.50px;top:266.80px;width:94.00px;height:1.00px;background:#8eaadb;"></div>
<div class="r" style="left:672.00px;top:270.00px;width:92.50px;height:13.20px;background:#b4c6e7;border:1px solid #8d9cc2;box-sizing:border-box;border-radius:2.500px;"></div>
<span class="t" style="left:676.50px;top:271.86px;font-size:8.0px;line-height:9.60px;color:#151515;letter-spacing:-0.120px;text-shadow:none;">NSW</span>
<div class="r" style="left:672.00px;top:285.00px;width:92.50px;height:13.20px;background:#b4c6e7;border:1px solid #8d9cc2;box-sizing:border-box;border-radius:2.500px;"></div>
<span class="t" style="left:676.50px;top:286.86px;font-size:8.0px;line-height:9.60px;color:#151515;letter-spacing:-0.120px;text-shadow:none;">VIC</span>
<div class="r" style="left:672.00px;top:300.00px;width:92.50px;height:13.20px;background:#b4c6e7;border:1px solid #8d9cc2;box-sizing:border-box;border-radius:2.500px;"></div>
<span class="t" style="left:676.50px;top:301.86px;font-size:8.0px;line-height:9.60px;color:#151515;letter-spacing:-0.120px;text-shadow:none;">WA</span>
<div class="r" style="left:767.70px;top:251.80px;width:101.80px;height:91.20px;background:#ffffff;border:1px solid #8eaadb;box-sizing:border-box;"></div>
<span class="t" style="left:772.50px;top:254.90px;font-size:8.3px;line-height:9.96px;color:#111;letter-spacing:0.183px;font-weight:bold;">Customer Type</span>
<svg class="r" style="left:837.5px;top:254.8px" width="10" height="9" viewBox="0 0 10 9" fill="none" stroke="#a6a6a6" stroke-width="0.800"><path d="M3.800 1.300h5.700M3.800 4.500h5.700M3.800 7.700h5.700"/><path d="M0.400 1.200l.8.800 1.300-1.500M0.400 4.400l.8.800 1.300-1.500M0.400 7.600l.8.800 1.300-1.500" stroke-width="0.600"/></svg><svg class="r" style="left:854.5px;top:255.10000000000002px" width="9" height="9" viewBox="0 0 9 9"><path d="M0.400 0.600h5.800l-2.200 2.600v3.400l-1.400-.9v-2.500z" fill="#4a4a4a" stroke="#4a4a4a" stroke-width="0.700"/><path d="M5.200 5l3.200 3.200M8.400 5l-3.200 3.200" stroke="#4a4a4a" stroke-width="0.900" fill="none"/></svg>
<div class="r" style="left:772.00px;top:265.30px;width:92.50px;height:1.00px;background:#8eaadb;"></div>
<div class="r" style="left:772.00px;top:268.00px;width:92.00px;height:13.20px;background:#b4c6e7;border:1px solid #8d9cc2;box-sizing:border-box;border-radius:2.500px;"></div>
<span class="t" style="left:776.50px;top:269.86px;font-size:8.0px;line-height:9.60px;color:#151515;letter-spacing:-0.120px;text-shadow:none;">Consumer</span>
<div class="r" style="left:772.00px;top:283.00px;width:92.00px;height:13.20px;background:#b4c6e7;border:1px solid #8d9cc2;box-sizing:border-box;border-radius:2.500px;"></div>
<span class="t" style="left:776.50px;top:284.86px;font-size:8.0px;line-height:9.60px;color:#151515;letter-spacing:-0.120px;text-shadow:none;">Corporate</span>
<div class="r" style="left:772.00px;top:298.00px;width:92.00px;height:13.20px;background:#b4c6e7;border:1px solid #8d9cc2;box-sizing:border-box;border-radius:2.500px;"></div>
<span class="t" style="left:776.50px;top:299.86px;font-size:8.0px;line-height:9.60px;color:#151515;letter-spacing:-0.120px;text-shadow:none;">Home Office</span>
<div class="r" style="left:772.00px;top:313.00px;width:92.00px;height:13.20px;background:#b4c6e7;border:1px solid #8d9cc2;box-sizing:border-box;border-radius:2.500px;"></div>
<span class="t" style="left:776.50px;top:314.86px;font-size:8.0px;line-height:9.60px;color:#151515;letter-spacing:-0.120px;text-shadow:none;">Small Business</span>
<div class="r" style="left:869.00px;top:254.00px;width:100.50px;height:108.50px;background:#ffffff;border:1px solid #8eaadb;box-sizing:border-box;"></div>
<span class="t" style="left:873.80px;top:257.60px;font-size:8.3px;line-height:9.96px;color:#111;letter-spacing:0.395px;font-weight:bold;">Account Ma...</span>
<svg class="r" style="left:937.5px;top:257.5px" width="10" height="9" viewBox="0 0 10 9" fill="none" stroke="#a6a6a6" stroke-width="0.800"><path d="M3.800 1.300h5.700M3.800 4.500h5.700M3.800 7.700h5.700"/><path d="M0.400 1.200l.8.800 1.300-1.500M0.400 4.400l.8.800 1.300-1.500M0.400 7.600l.8.800 1.300-1.500" stroke-width="0.600"/></svg><svg class="r" style="left:954.5px;top:257.8px" width="9" height="9" viewBox="0 0 9 9"><path d="M0.400 0.600h5.800l-2.200 2.600v3.400l-1.400-.9v-2.500z" fill="#4a4a4a" stroke="#4a4a4a" stroke-width="0.700"/><path d="M5.200 5l3.200 3.200M8.400 5l-3.200 3.200" stroke="#4a4a4a" stroke-width="0.900" fill="none"/></svg>
<div class="r" style="left:873.30px;top:267.80px;width:91.20px;height:1.00px;background:#8eaadb;"></div>
<div class="r" style="left:873.00px;top:271.00px;width:79.50px;height:13.20px;background:#b4c6e7;border:1px solid #8d9cc2;box-sizing:border-box;border-radius:2.500px;"></div>
<span class="t" style="left:877.50px;top:272.86px;font-size:8.0px;line-height:9.60px;color:#151515;letter-spacing:-0.120px;text-shadow:none;">Aanya Zhang</span>
<div class="r" style="left:873.00px;top:286.00px;width:79.50px;height:13.20px;background:#b4c6e7;border:1px solid #8d9cc2;box-sizing:border-box;border-radius:2.500px;"></div>
<span class="t" style="left:877.50px;top:287.86px;font-size:8.0px;line-height:9.60px;color:#151515;letter-spacing:-0.120px;text-shadow:none;">Charlie Bui</span>
<div class="r" style="left:873.00px;top:301.00px;width:79.50px;height:13.20px;background:#b4c6e7;border:1px solid #8d9cc2;box-sizing:border-box;border-radius:2.500px;"></div>
<span class="t" style="left:877.50px;top:302.86px;font-size:8.0px;line-height:9.60px;color:#151515;letter-spacing:-0.120px;text-shadow:none;">Connor Betts</span>
<div class="r" style="left:873.00px;top:316.00px;width:79.50px;height:13.20px;background:#b4c6e7;border:1px solid #8d9cc2;box-sizing:border-box;border-radius:2.500px;"></div>
<span class="t" style="left:877.50px;top:317.86px;font-size:8.0px;line-height:9.60px;color:#151515;letter-spacing:-0.120px;text-shadow:none;">Leighton Forrest</span>
<div class="r" style="left:873.00px;top:331.00px;width:79.50px;height:13.20px;background:#b4c6e7;border:1px solid #8d9cc2;box-sizing:border-box;border-radius:2.500px;"></div>
<span class="t" style="left:877.50px;top:332.86px;font-size:8.0px;line-height:9.60px;color:#151515;letter-spacing:-0.120px;text-shadow:none;">Mihael Khan</span>
<div class="r" style="left:873.00px;top:346.00px;width:79.50px;height:13.20px;background:#b4c6e7;border:1px solid #8d9cc2;box-sizing:border-box;border-radius:2.500px;"></div>
<span class="t" style="left:877.50px;top:347.86px;font-size:8.0px;line-height:9.60px;color:#151515;letter-spacing:-0.120px;text-shadow:none;">Natasha Song</span>
<div class="r" style="left:958.50px;top:280.00px;width:2.30px;height:24.00px;background:#a6a6a6;border-radius:1px;"></div>
<div class="r" style="left:756.50px;top:348.50px;width:101.30px;height:85.20px;background:#ffffff;border:1px solid #8eaadb;box-sizing:border-box;"></div>
<span class="t" style="left:761.30px;top:352.60px;font-size:8.3px;line-height:9.96px;color:#111;letter-spacing:0.365px;font-weight:bold;">Product Cat...</span>
<svg class="r" style="left:825.5px;top:352.5px" width="10" height="9" viewBox="0 0 10 9" fill="none" stroke="#a6a6a6" stroke-width="0.800"><path d="M3.800 1.300h5.700M3.800 4.500h5.700M3.800 7.700h5.700"/><path d="M0.400 1.200l.8.800 1.300-1.500M0.400 4.400l.8.800 1.300-1.500M0.400 7.600l.8.800 1.300-1.500" stroke-width="0.600"/></svg><svg class="r" style="left:843.0px;top:352.8px" width="9" height="9" viewBox="0 0 9 9"><path d="M0.400 0.600h5.800l-2.200 2.600v3.400l-1.400-.9v-2.500z" fill="none" stroke="#a8a8a8" stroke-width="0.700"/><path d="M5.200 5l3.200 3.200M8.400 5l-3.200 3.200" stroke="#a8a8a8" stroke-width="0.900" fill="none"/></svg>
<div class="r" style="left:760.80px;top:362.80px;width:92.00px;height:1.00px;background:#8eaadb;"></div>
<div class="r" style="left:761.30px;top:365.40px;width:91.70px;height:13.20px;background:#b4c6e7;border:1px solid #8d9cc2;box-sizing:border-box;border-radius:2.500px;"></div>
<span class="t" style="left:765.80px;top:367.26px;font-size:8.0px;line-height:9.60px;color:#151515;letter-spacing:-0.120px;text-shadow:none;">Furniture</span>
<div class="r" style="left:761.30px;top:380.40px;width:91.70px;height:13.20px;background:#b4c6e7;border:1px solid #8d9cc2;box-sizing:border-box;border-radius:2.500px;"></div>
<span class="t" style="left:765.80px;top:382.26px;font-size:8.0px;line-height:9.60px;color:#151515;letter-spacing:-0.120px;text-shadow:none;">Office Supplies</span>
<div class="r" style="left:761.30px;top:395.40px;width:91.70px;height:13.20px;background:#b4c6e7;border:1px solid #8d9cc2;box-sizing:border-box;border-radius:2.500px;"></div>
<span class="t" style="left:765.80px;top:397.26px;font-size:8.0px;line-height:9.60px;color:#151515;letter-spacing:-0.120px;text-shadow:none;">Technology</span>
</div>
<!-- gen_wm -->
<div class="sh">
<span class="t" lang="ar" dir="rtl" style="left:448px;top:460px;width:128px;text-align:center;font-family:'DejaVu Sans','Noto Sans CJK SC',sans-serif;font-weight:bold;font-size:35px;transform:scaleY(1.12);transform-origin:50% 100%;line-height:50px;color:rgba(184,184,184,0.36);letter-spacing:0;text-shadow:none;">مستقل</span>
<span class="t" style="left:450.50px;top:498.87px;font-size:21px;line-height:25.20px;color:rgba(184,184,184,0.40);font-weight:bold;transform:scaleX(0.9496);transform-origin:0 50%;text-shadow:none;">mostaql.com</span>
</div>
</body></html>
